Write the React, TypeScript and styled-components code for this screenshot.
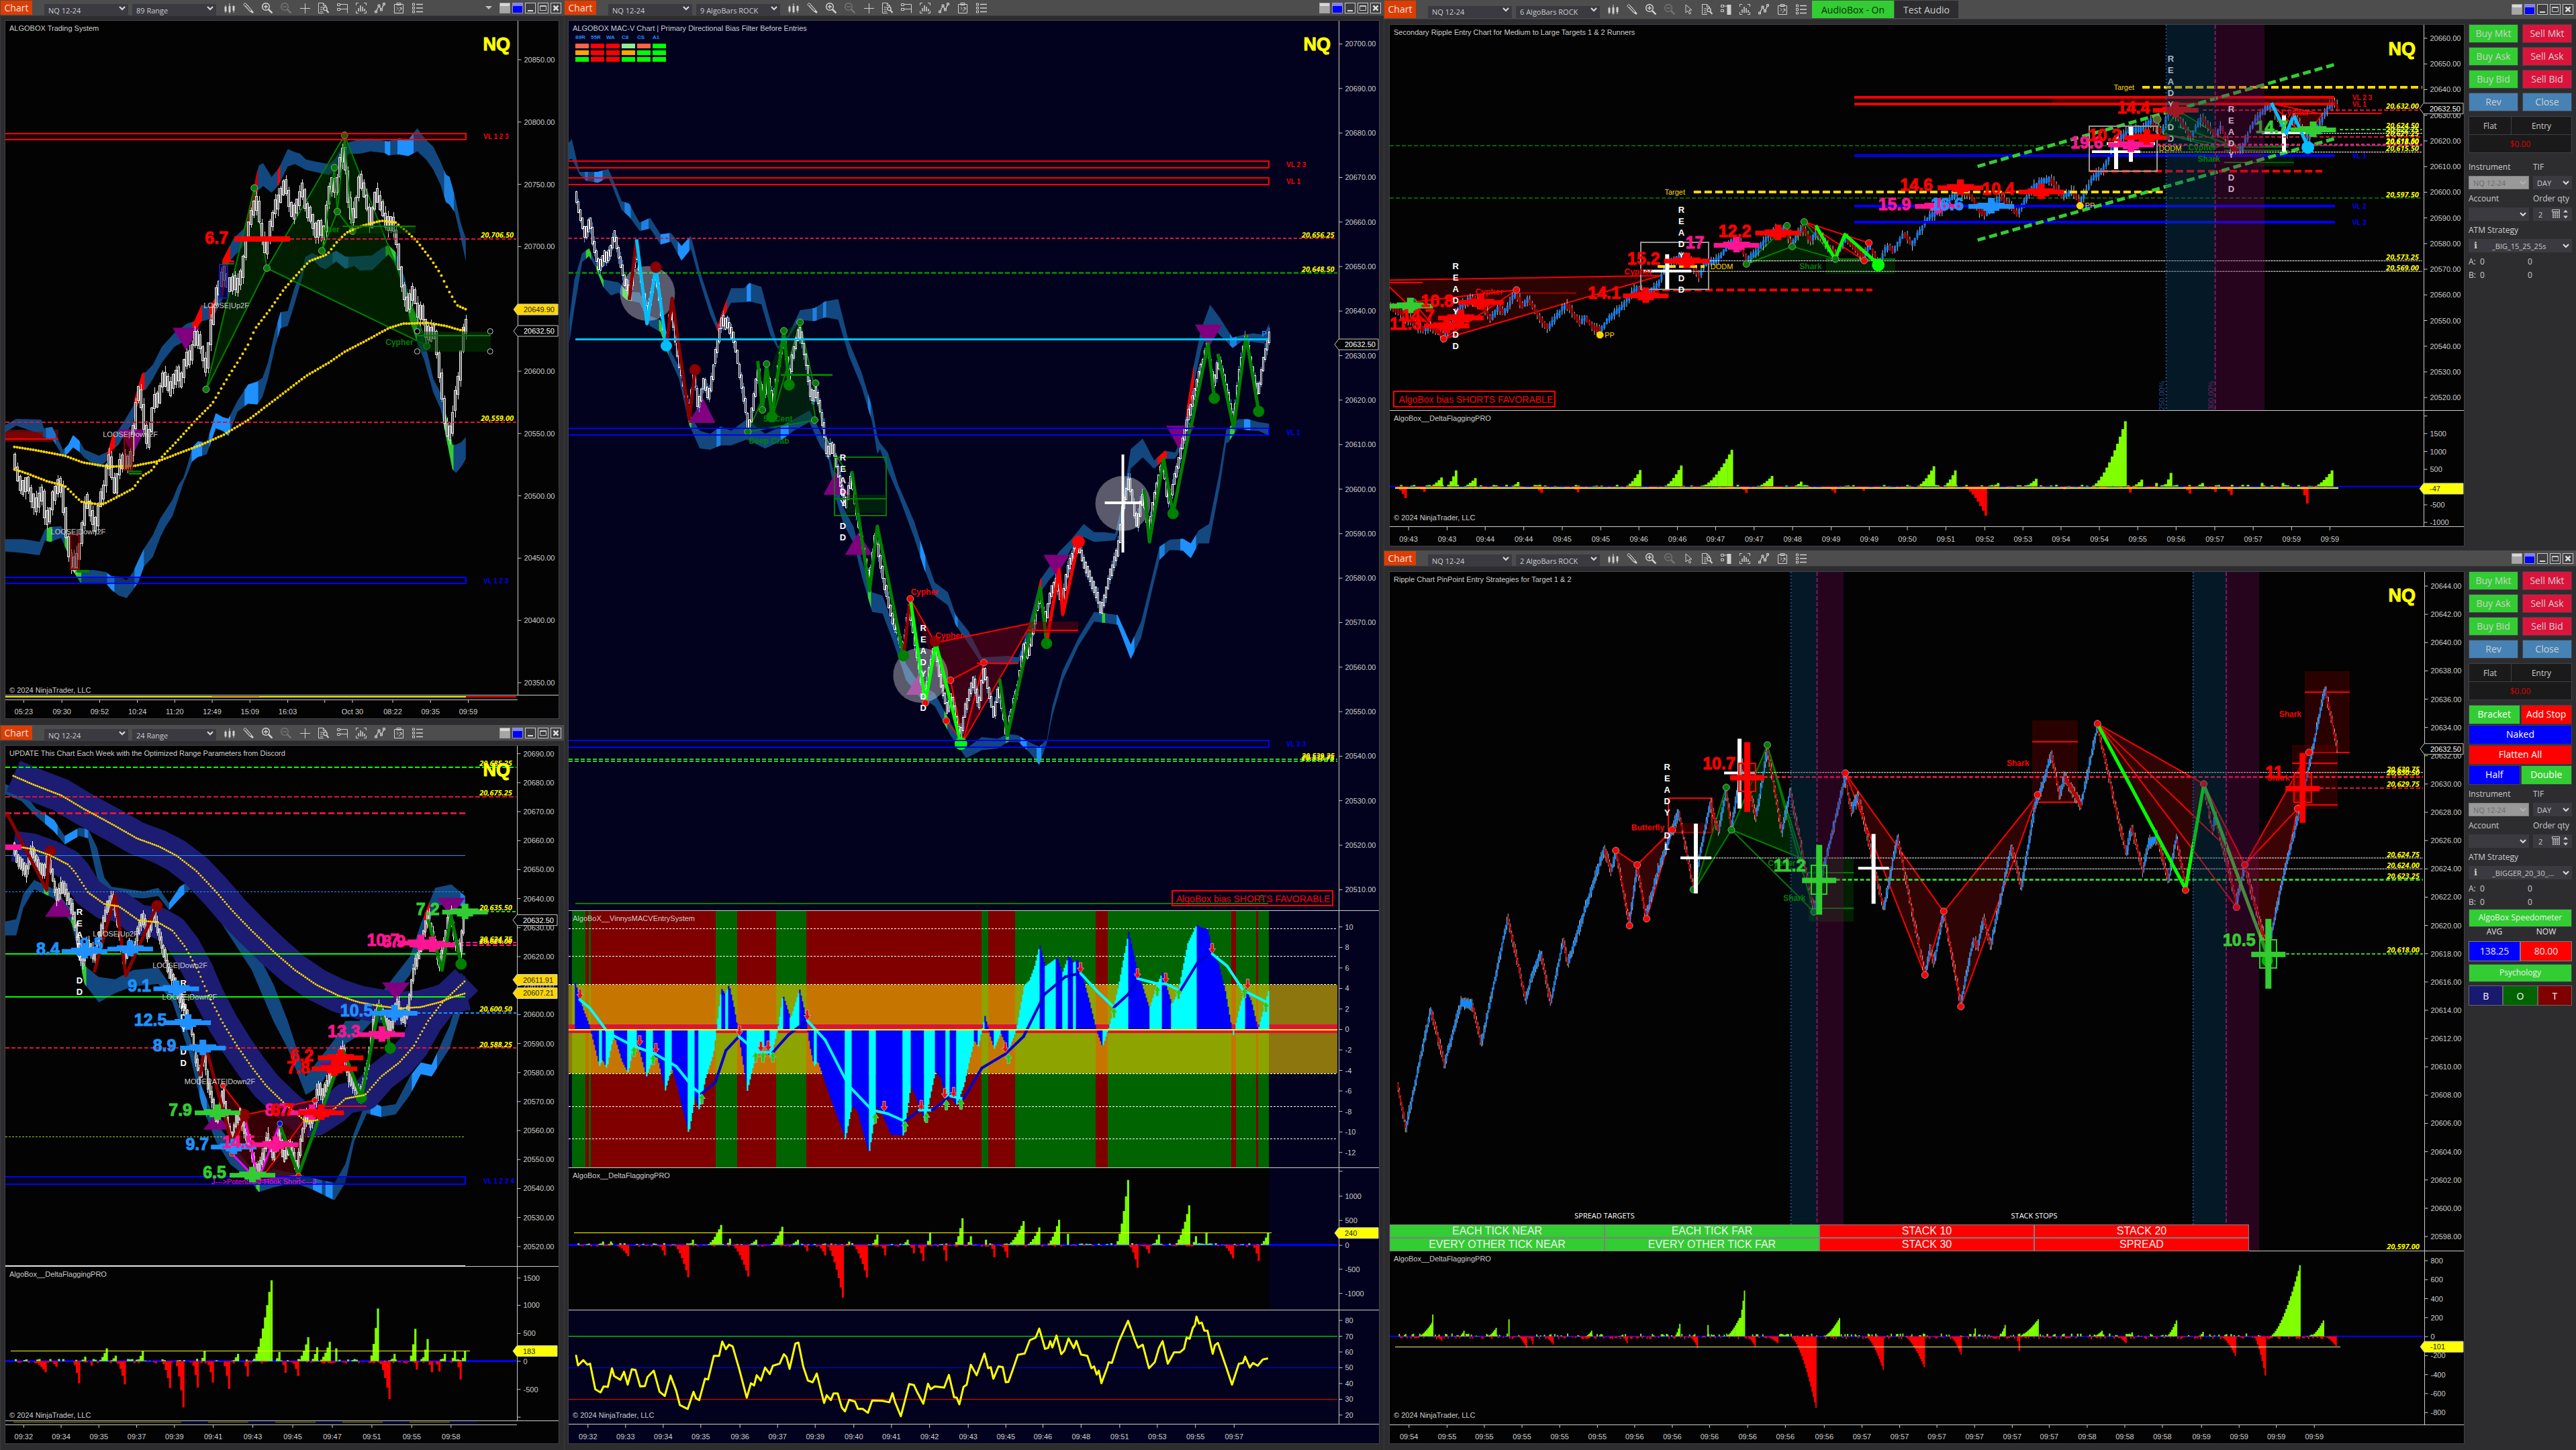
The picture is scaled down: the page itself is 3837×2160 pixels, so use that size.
import React from "react";
import styled, { createGlobalStyle } from "styled-components";

/* ------------------------------------------------------------------ */
/* Theme                                                               */
/* ------------------------------------------------------------------ */

const UI = `"Open Sans", "Noto Sans", sans-serif`;
const PLOT = `"Liberation Sans", Arial, sans-serif`;

const C = {
  chrome: "#2d2d30",
  edge: "#3f3f46",
  field: "#3a3a40",
  ink: "#cccccc",
  orange: "#dd3d00",
  lime: "#32cd32",
  crimson: "#dc143c",
  steel: "#4682b4",
  sky: "#1e90ff",
  pink: "#ff1493",
  green: "#008000",
  band: "#12487f",
  gold: "#ffd700",
  navy: "#02021e",
};

const GlobalStyle = createGlobalStyle`
  * { box-sizing: border-box; }
  body { margin: 0; background: #1b1b1e; color: ${C.ink}; font-family: ${UI}; overflow: hidden; }
  button, select, input { font-family: inherit; margin: 0; }
`;

/* ------------------------------------------------------------------ */
/* Geometry helpers: traces are recorded on a 1568-unit grid per region */
/* ------------------------------------------------------------------ */

type Scale = { x: (u: number) => number; y: (v: number) => number };
type Pt = [number, number];

const GRID = 1568;
const region = (left: number, top: number, width: number, height: number): Scale => ({
  x: (u) => left + (u * width) / GRID,
  y: (v) => top + (v * height) / GRID,
});

const A1 = region(0, 0, 840, 540);
const A2 = region(0, 540, 840, 640);
const B1 = region(0, 1080, 840, 1080);
const M1 = region(840, 0, 1220, 680);
const M2 = region(840, 640, 1220, 760);
const M3 = region(840, 1340, 1220, 820);
const D1 = region(2056, 0, 1000, 820);
const D2 = region(2950, 0, 887, 820);
const E1 = region(2056, 820, 1000, 1340);
const E2 = region(2950, 820, 887, 1340);

const nums = (t: string) => (t.match(/-?\d+/g) || []).map(Number);
const pairs = (s: Scale, t: string): Pt[] => {
  const n = nums(t);
  const out: Pt[] = [];
  for (let i = 0; i + 1 < n.length; i += 2) out.push([s.x(n[i]), s.y(n[i + 1])]);
  return out;
};
const triples = (s: Scale, t: string): number[][] => {
  const n = nums(t);
  const out: number[][] = [];
  for (let i = 0; i + 2 < n.length; i += 3) out.push([s.x(n[i]), s.y(n[i + 1]), s.y(n[i + 2])]);
  return out;
};
const noise = (i: number) => {
  const v = Math.sin(i * 12.9898 + 4.1) * 43758.5453;
  return v - Math.floor(v);
};
const join = (p: number[][]) => p.map((q) => `${q[0].toFixed(1)},${q[1].toFixed(1)}`).join(" ");
const sample = (rows: number[][], x: number, k: number) => {
  let i = 1;
  while (i < rows.length - 1 && rows[i][0] < x) i++;
  const a = rows[i - 1];
  const b = rows[i];
  const t = b[0] === a[0] ? 0 : Math.max(0, Math.min(1, (x - a[0]) / (b[0] - a[0])));
  return a[k] + (b[k] - a[k]) * t;
};

/* ------------------------------------------------------------------ */
/* Plot primitives                                                     */
/* ------------------------------------------------------------------ */

const Canvas = styled.svg`
  display: block;
  width: 100%;
  height: 100%;
`;
const Txt = styled.text<{ $c?: string; $size?: number; $anchor?: string; $bold?: boolean }>`
  font-family: ${PLOT};
  font-size: ${(p) => p.$size || 11}px;
  font-weight: ${(p) => (p.$bold ? 700 : 400)};
  fill: ${(p) => p.$c || C.ink};
  text-anchor: ${(p) => p.$anchor || "start"};
  dominant-baseline: central;
`;
const Tag = styled.text`
  font-family: ${UI};
  font-size: 11px;
  font-weight: 700;
  font-style: italic;
  fill: #ffff00;
  text-anchor: end;
  dominant-baseline: central;
`;
const Strength = styled.text<{ $c: string }>`
  font-family: ${PLOT};
  font-size: 25px;
  font-weight: 700;
  fill: ${(p) => p.$c};
  stroke: ${(p) => p.$c};
  stroke-width: 1px;
  dominant-baseline: central;
`;

const Line = ({ s, p, c, w = 2, f = "none", dash, o }: { s: Scale; p: string; c: string; w?: number; f?: string; dash?: string; o?: number }) => (
  <polyline points={join(pairs(s, p))} stroke={c} strokeWidth={w} fill={f} strokeDasharray={dash} opacity={o} strokeLinejoin="round" />
);
const Level = ({ s, y, a, b, c, w = 1, dash }: { s: Scale; y: number; a: number; b: number; c: string; w?: number; dash?: string }) => (
  <line x1={s.x(a)} x2={s.x(b)} y1={s.y(y)} y2={s.y(y)} stroke={c} strokeWidth={w} strokeDasharray={dash} shapeRendering="crispEdges" />
);
const Shape = ({ s, p, f, o = 1 }: { s: Scale; p: string; f: string; o?: number }) => <polygon points={join(pairs(s, p))} fill={f} opacity={o} />;
const Box = ({ s, r, c = "none", w = 2, f = "none" }: { s: Scale; r: number[]; c?: string; w?: number; f?: string }) => (
  <rect x={s.x(r[0])} y={s.y(r[1])} width={s.x(r[2]) - s.x(r[0])} height={s.y(r[3]) - s.y(r[1])} stroke={c} strokeWidth={w} fill={f} shapeRendering="crispEdges" />
);
const Dots = ({ s, p, c, r = 5, ring = "#999999" }: { s: Scale; p: string; c: string; r?: number; ring?: string }) => (
  <>
    {pairs(s, p).map(([x, y], i) => (
      <circle key={i} cx={x} cy={y} r={r} fill={c} stroke={ring} strokeWidth={1} />
    ))}
  </>
);
const Label = ({ s, at, c, size, anchor, bold, children }: { s: Scale; at: Pt; c?: string; size?: number; anchor?: string; bold?: boolean; children: React.ReactNode }) => (
  <Txt x={s.x(at[0])} y={s.y(at[1])} $c={c} $size={size} $anchor={anchor} $bold={bold}>
    {children}
  </Txt>
);
const Pattern = ({ s, at, c = C.green, children }: { s: Scale; at: Pt; c?: string; children: React.ReactNode }) => (
  <Label s={s} at={at} c={c} size={12} bold>{children}</Label>
);
const Volume = ({ s, at, c, children }: { s: Scale; at: Pt; c: string; children: React.ReactNode }) => (
  <Label s={s} at={at} c={c} size={10} bold>{children}</Label>
);
const Price = ({ s, x, y, children }: { s: Scale; x: number; y: number; children: React.ReactNode }) => (
  <Tag x={s.x(x)} y={s.y(y)}>{children}</Tag>
);

const Ribbon = ({ rows, marks = [], c = C.band, o = 1 }: { rows: number[][]; marks?: [number, number, string][]; c?: string; o?: number }) => {
  const shape = (list: number[][]) => join([...list.map((q) => [q[0], q[1]]), ...[...list].reverse().map((q) => [q[0], q[2]])]);
  return (
    <g opacity={o}>
      <polygon points={shape(rows)} fill={c} />
      {marks.map(([a, b, col], i) => {
        const cut = [
          [a, sample(rows, a, 1), sample(rows, a, 2)],
          ...rows.filter((q) => q[0] > a && q[0] < b),
          [b, sample(rows, b, 1), sample(rows, b, 2)],
        ];
        return <polygon key={i} points={shape(cut)} fill={col} />;
      })}
    </g>
  );
};

const Candles = ({ path, step, body, tall, wick, up, down, rise, outline, wickColor }: { path: number[][]; step: number; body: number; tall: number; wick: number; up: string; down: string; rise?: boolean; outline?: string; wickColor: string }) => {
  let wicks = "";
  let ups = "";
  let downs = "";
  const end = path[path.length - 1][0];
  let i = 0;
  for (let x = path[0][0]; x < end; x += step) {
    i++;
    const y0 = sample(path, x, 1);
    const y1 = sample(path, Math.min(end, x + step), 1);
    const mid = (y0 + y1) / 2 + (noise(i) - 0.5) * tall * 0.35;
    const h = Math.max(tall, Math.abs(y1 - y0) * 1.1);
    const left = outline ? Math.floor(x) + 0.5 : x;
    const rect = `M${left.toFixed(1)} ${(mid - h / 2).toFixed(1)}h${body}v${h.toFixed(1)}h${-body}z`;
    const a = noise(i + 500) * wick;
    const b = noise(i + 900) * wick;
    wicks += `M${(left + body / 2).toFixed(1)} ${(mid - h / 2 - a).toFixed(1)}V${(mid + h / 2 + b).toFixed(1)}`;
    if (y1 <= y0 || !rise) ups += rect;
    else downs += rect;
  }
  return (
    <g shapeRendering={outline ? "crispEdges" : undefined}>
      <path d={wicks} stroke={wickColor} strokeWidth={1} fill="none" />
      <path d={ups} fill={up} stroke={outline || "none"} />
      <path d={downs} fill={down} stroke={outline || "none"} />
    </g>
  );
};

const Delta = ({ s, base, step, from, to, ups, downs }: { s: Scale; base: number; step: number; from: number; to: number; ups: string; downs: string }) => {
  const make = (t: string, sign: number) => {
    let d = "";
    const n = nums(t);
    for (let i = 0; i + 2 < n.length; i += 3) {
      const [a, b, h] = [n[i], n[i + 1], n[i + 2]];
      const count = Math.max(1, Math.round((b - a) / step));
      for (let k = 0; k < count; k++) {
        const v = h * Math.pow((k + 1) / count, 1.6);
        d += `M${s.x(b - (count - k) * step).toFixed(1)} ${s.y(base)}V${s.y(base - sign * v).toFixed(1)}h${(s.x(step) - s.x(0)).toFixed(1)}V${s.y(base)}z`;
      }
    }
    return d;
  };
  let small = "";
  let smallDown = "";
  for (let x = from, i = 0; x < to; x += step, i++) {
    const v = (noise(i + 40) - 0.5) * 10;
    const bar = `M${s.x(x).toFixed(1)} ${s.y(base)}V${s.y(base - v).toFixed(1)}h${(s.x(step) - s.x(0)).toFixed(1)}V${s.y(base)}z`;
    if (Math.floor(i / 4) % 2 ? v > 0 : v > 3) small += bar;
    else if (v < 0) smallDown += bar;
  }
  return (
    <g>
      <path d={make(ups, 1) + small} fill="#7fff00" />
      <path d={make(downs, -1) + smallDown} fill="#ff0000" />
    </g>
  );
};

const Cross = ({ s, at, c, text, tx, ty }: { s: Scale; at: Pt; c: string; text?: string; tx?: number; ty?: number }) => {
  const x = s.x(at[0]);
  const y = s.y(at[1]);
  return (
    <g>
      <path d={`M${x - 34} ${y - 3}H${x - 20}V${y - 5}H${x - 5}V${y - 12}H${x + 5}V${y - 5}H${x + 20}V${y - 3}H${x + 34}V${y + 4}H${x + 12}V${y + 7}H${x + 5}V${y + 11}H${x - 5}V${y + 7}H${x - 12}V${y + 4}H${x - 34}z`} fill={c} />
      {text && <Strength x={s.x(tx || 0)} y={s.y(ty || 0)} $c={c}>{text}</Strength>}
    </g>
  );
};
const Plus = ({ s, at, c = "#ffffff", w = 46, h = 104, t = 6 }: { s: Scale; at: Pt; c?: string; w?: number; h?: number; t?: number }) => (
  <g fill={c}>
    <rect x={s.x(at[0]) - t / 2} y={s.y(at[1]) - h / 2} width={t} height={h} />
    <rect x={s.x(at[0]) - w / 2} y={s.y(at[1]) - 3} width={w} height={t > 8 ? 8 : 4} />
  </g>
);
const Ready = ({ s, at, word = "READY DD" }: { s: Scale; at: Pt; word?: string }) => (
  <g>
    {word.split("").map((ch, i) =>
      ch === " " ? null : (
        <Txt key={i} x={s.x(at[0])} y={s.y(at[1]) + i * 17} $c="#ffffff" $size={13} $anchor="middle" $bold>
          {ch}
        </Txt>
      )
    )}
  </g>
);

const Axis = ({ x, top, bottom, s, ticks }: { x: number; top: number; bottom: number; s: Scale; ticks: [string, number][] }) => (
  <g>
    <line x1={x} x2={x} y1={top} y2={bottom} stroke={C.ink} />
    {ticks.map(([t, v], i) => (
      <g key={i}>
        <line x1={x} x2={x + 5} y1={s.y(v)} y2={s.y(v)} stroke={C.ink} />
        <Txt x={x + 9} y={s.y(v)}>{t}</Txt>
      </g>
    ))}
  </g>
);
const ramp = (first: number, step: number, y0: number, dy: number, count: number, digits = 2): [string, number][] =>
  Array.from({ length: count }, (_, i) => [(first - step * i).toFixed(digits), y0 + dy * i] as [string, number]);

const Flag = ({ x, right, y, fill, ink, text, stroke }: { x: number; right: number; y: number; fill: string; ink: string; text: string; stroke?: string }) => (
  <g>
    <polygon points={`${x - 6},${y} ${x},${y - 8} ${right},${y - 8} ${right},${y + 8} ${x},${y + 8}`} fill={fill} stroke={stroke || C.ink} />
    <Txt x={x + 9} y={y} $c={ink}>{text}</Txt>
  </g>
);
const TimeAxis = ({ s, xs, labels, y }: { s: Scale; xs: string; labels: string; y: number }) => {
  const names = labels.split(" ");
  return (
    <g>
      {nums(xs).map((u, i) => (
        <g key={i}>
          <line x1={s.x(u)} x2={s.x(u)} y1={y} y2={y + 5} stroke={C.ink} />
          {names[i] && <Txt x={s.x(u)} y={y + 18} $anchor="middle">{names[i].replace("_", " ")}</Txt>}
        </g>
      ))}
    </g>
  );
};

/* ------------------------------------------------------------------ */
/* Window chrome                                                       */
/* ------------------------------------------------------------------ */

const Desktop = styled.main`
  display: grid;
  grid-template-columns: 840fr 1221fr 1776fr;
  height: 100vh;
`;
const Stack = styled.div<{ $rows: string }>`
  display: grid;
  grid-template-rows: ${(p) => p.$rows};
  min-width: 0;
  min-height: 0;
`;
const Frame = styled.section`
  display: flex;
  flex-direction: column;
  min-width: 0;
  min-height: 0;
  background: ${C.chrome};
  box-shadow: inset 1px 1px 0 #3a3a3f;
`;
const Bar = styled.header<{ $h: number }>`
  display: flex;
  flex: none;
  align-items: center;
  height: ${(p) => p.$h}px;
  padding: 1px 4px 1px 1px;
  background: #4d4d4d;
  border-bottom: 1px solid #3a3a3e;
`;
const ChartTab = styled.button`
  align-self: stretch;
  width: 47px;
  margin-right: 18px;
  padding: 0;
  border: 0;
  background: ${C.orange};
  color: #e6e6e6;
  font-size: 14px;
  line-height: 18px;
`;
const Picker = styled.label<{ $w?: number; $h?: number; $off?: boolean }>`
  position: relative;
  display: block;
  flex: none;
  width: ${(p) => (p.$w ? `${p.$w}px` : "100%")};
  height: ${(p) => p.$h || 18}px;
  margin-right: ${(p) => (p.$w === 125 ? 6 : 0)}px;
  svg {
    position: absolute;
    right: 4px;
    top: 50%;
    margin-top: -5px;
    pointer-events: none;
    opacity: ${(p) => (p.$off ? 0.4 : 1)};
  }
`;
const Select = styled.select<{ $pad?: number; $off?: boolean }>`
  appearance: none;
  width: 100%;
  height: 100%;
  padding: 0 16px 0 ${(p) => p.$pad || 6}px;
  border: ${(p) => (p.$off ? "1px solid #808080" : "0")};
  border-radius: 0;
  background: ${(p) => (p.$off ? "#999999" : C.field)};
  color: ${(p) => (p.$off ? "#6c6c6c" : C.ink)};
  opacity: 1;
  font-size: 11px;
  text-overflow: ellipsis;
`;
const Tools = styled.div`
  display: flex;
  gap: 8px;
  margin-left: 4px;
`;
const Tool = styled.button<{ $dim?: boolean }>`
  width: 20px;
  height: 18px;
  padding: 0;
  border: 0;
  background: none;
  color: ${(p) => (p.$dim ? "#737373" : "#d0d0d0")};
  svg { display: block; margin: 1px 2px; }
`;
const AudioButton = styled.button<{ $on?: boolean }>`
  align-self: stretch;
  width: ${(p) => (p.$on ? 122 : 95)}px;
  margin-left: ${(p) => (p.$on ? 6 : 1)}px;
  padding: 0;
  border: 0;
  background: ${(p) => (p.$on ? C.lime : C.chrome)};
  color: ${(p) => (p.$on ? "#0a2a0a" : "#cccccc")};
  font-size: 14px;
`;
const Controls = styled.div`
  display: flex;
  align-items: center;
  gap: 3px;
  margin-left: auto;
`;
const Swatch = styled.button<{ $blue?: boolean }>`
  width: 16px;
  height: 16px;
  padding: 0;
  border: 1px solid #9a9a9a;
  background: ${(p) => (p.$blue ? "linear-gradient(#8080ff 0 30%, #0000ff 30%)" : "linear-gradient(#d8d8d8 0 30%, #a6a6a6 30%)")};
`;
const Sys = styled.button`
  width: 16px;
  height: 16px;
  padding: 0;
  border: 1px solid #c8c8c8;
  background: #3f3f42;
  svg { display: block; }
`;
const Chevron = () => (
  <svg width="10" height="10" viewBox="0 0 10 10" fill="none" stroke="#d8d8d8" strokeWidth="2.2"><path d="M1 3l4 4 4-4" /></svg>
);

const iconPaths: Record<string, React.ReactNode> = {
  bars: <><path d="M2 4v11M8 1v15M14 4v11" strokeWidth="1" /><path d="M2 6v7M8 5v9M14 5v7" strokeWidth="3" /></>,
  pencil: <><path d="M1.5 1.5l2-1 9 10 2 4.5-4.5-2.2-9-9.5zM3 4l8.5 9M5 2.5l8 9" /><path d="M12 12l3 3" strokeWidth="2.5" /></>,
  zoomIn: <><circle cx="6" cy="6" r="5.3" strokeWidth="1.5" /><path d="M6 3v6M3 6h6" strokeWidth="1.5" /><path d="M10 10l5.5 5.5" strokeWidth="2.5" /></>,
  zoomOut: <><circle cx="6" cy="6" r="5.3" strokeWidth="1.5" /><path d="M3 6h6" strokeWidth="1.5" /><path d="M10 10l5.5 5.5" strokeWidth="2.5" /></>,
  plus: <path d="M8.5 1v15M1 8.5h15" />,
  cursor: <path d="M4 1v12l3-3 2.5 5 2-1-2.5-5h4z" />,
  report: <><path d="M8 15.5H.5V.5h7l4 4v2M7.5 .5v4h4M3 7h4M3 10h3M3 13h4" /><circle cx="10.5" cy="9" r="2.6" strokeWidth="1.4" /><path d="M12 11l3.5 4" strokeWidth="2" /></>,
  panel: <path d="M.5 1.5h4v3h-4zM.5 8.5h4v3h-4zM5 2.5h10.5v13M5 9.5h10" />,
  panelFull: <><path d="M.5 1.5h4v3h-4zM.5 8.5h4v3h-4zM5 3h5" /><path d="M12.5 1v15" strokeWidth="6" /></>,
  frame: <><path d="M4 .5H.5V4M12 .5h3.5V4M4 15.5H.5V12M12 15.5h3.5V12" /><path d="M4 13V8M7 13V4M10 13V6M13 13V9" strokeWidth="1.5" /></>,
  nodes: <><path d="M2 13.5L6.5 4.5L10 10.5L14 2" strokeWidth="1.3" /><path d="M.5 12h3v3h-3zM5 3h3v3h-3zM8.5 9h3v3h-3zM12.5 .5h3v3h-3z" fill="#888888" /></>,
  board: <path d="M1.5 2.5h13v13h-13zM5 .5h6v3H5zM5 6.5l2 2-2 2M8 13l4-5M9 7.5h3v3" />,
  list: <><path d="M.5 1h3v3h-3zM.5 6.5h3v3h-3zM.5 12h3v3h-3z" /><path d="M6 2.5h10M6 8h10M6 13.5h10" strokeWidth="1.3" /></>,
};
const Glyph = ({ name }: { name: string }) => (
  <svg width="16" height="16" viewBox="0 0 16 16" fill="none" stroke="currentColor" strokeWidth="1">{iconPaths[name]}</svg>
);

const Toolbar = ({ range, height = 24, caret, audio, trading }: { range: string; height?: number; caret?: boolean; audio?: boolean; trading?: boolean }) => {
  const names = ["bars", "pencil", "zoomIn", "zoomOut", trading ? "cursor" : "plus", "report", trading ? "panelFull" : "panel", "frame", "nodes", "board", "list"];
  return (
    <Bar $h={height}>
      <ChartTab>Chart</ChartTab>
      <Picker $w={125}><Select aria-label="Instrument"><option>NQ 12-24</option></Select><Chevron /></Picker>
      <Picker $w={125}><Select aria-label="Interval"><option>{range}</option></Select><Chevron /></Picker>
      <Tools>
        {names.map((n) => <Tool key={n} $dim={n === "zoomOut"} aria-label={n}><Glyph name={n} /></Tool>)}
      </Tools>
      {audio && <><AudioButton $on>AudioBox - On</AudioButton><AudioButton>Test Audio</AudioButton></>}
      <Controls>
        {caret && <svg width="22" height="8" viewBox="0 0 22 8"><path d="M4 1h10l-5 5z" fill="#bdbdbd" /></svg>}
        <Swatch aria-label="Template" />
        <Swatch $blue aria-label="Link colour" />
        <Sys aria-label="Minimize"><svg width="14" height="14"><path d="M3 11h8" stroke="#ddd" strokeWidth="2" /></svg></Sys>
        <Sys aria-label="Maximize"><svg width="14" height="14"><path d="M2.5 3.5h9v7h-9zM3 4.500h8" fill="none" stroke="#ccc" /></svg></Sys>
        <Sys aria-label="Close"><svg width="14" height="14"><path d="M3.5 3.5l7 7M10.5 3.5l-7 7" stroke="#ddd" strokeWidth="2.5" /></svg></Sys>
      </Controls>
    </Bar>
  );
};

const Body = styled.div<{ $foot: number }>`
  display: flex;
  flex: 1;
  gap: 6px;
  min-height: 0;
  padding: 7px 6px ${(p) => p.$foot}px 8px;
`;
const Plot = styled.div<{ $m?: string; $bg?: string }>`
  display: flex;
  flex: 1;
  flex-direction: column;
  min-width: 0;
  min-height: 0;
  margin: ${(p) => p.$m || "0"};
  border: 1px solid ${C.edge};
  background: ${(p) => p.$bg || "#030303"};
`;
const PaneBox = styled.div<{ $grow: number }>`
  position: relative;
  flex: ${(p) => p.$grow} 1 0;
  min-height: 0;
  overflow: hidden;
`;
const Caption = styled.span<{ $bottom?: number }>`
  position: absolute;
  left: 6px;
  ${(p) => (p.$bottom ? `bottom: ${p.$bottom}px;` : "top: 4px;")}
  font: 11px/14px ${PLOT};
  color: ${C.ink};
  white-space: pre;
`;
const Ticker = styled.strong<{ $top: number }>`
  position: absolute;
  top: ${(p) => p.$top}px;
  right: 72px;
  font: 700 27px/36px ${PLOT};
  color: #ffff00;
  -webkit-text-stroke: 1px #ffff00;
`;

const Pane = ({ box, title, copyright, ticker, children, extra }: { box: [number, number, number, number]; title?: string; copyright?: number; ticker?: number; children: React.ReactNode; extra?: React.ReactNode }) => (
  <PaneBox $grow={box[3]}>
    <Canvas viewBox={box.join(" ")}>
      {children}
      <line x1={box[0]} x2={box[0] + box[2]} y1={box[1] + box[3] - 0.5} y2={box[1] + box[3] - 0.5} stroke={title || copyright ? C.ink : "none"} />
    </Canvas>
    {title && <Caption>{title}</Caption>}
    {copyright && <Caption $bottom={copyright}>© 2024 NinjaTrader, LLC</Caption>}
    {ticker && <Ticker $top={ticker}>NQ</Ticker>}
    {extra}
  </PaneBox>
);

/* ------------------------------------------------------------------ */
/* Chart 1: 89 Range                                                   */
/* ------------------------------------------------------------------ */

const a1 = (t: string) => triples(A1, t);
const a2 = (t: string) => triples(A2, t);
const tint = (s: Scale, t: string): [number, number, string][] =>
  t.split(";").map((q) => {
    const [a, b, c] = q.trim().split(" ");
    return [s.x(+a), s.x(+b), c];
  });

const aUpper = [
  ...a2("15,228,255 45,206,230 115,208,262 122,240,275 145,235,278 160,275,310 175,320,345 190,300,330 203,265,310 220,285,325 235,318,348 275,340,385 300,325,355 312,268,320 330,245,300 345,215,265 370,160,220 375,130,190 395,40,100 405,35,100 425,8,60"),
  ...a1("450,1500,1568 485,1440,1500 520,1400,1470 540,1390,1440 560,1320,1390 585,1325,1380 600,1285,1350 620,1120,1290 630,1090,1150 650,1030,1110 680,985,1060 690,930,1000 700,870,940 712,760,840 720,715,820 732,706,805 755,765,833 775,728,800 800,645,720 820,658,710 835,665,722 850,690,735 880,700,745 915,710,757 930,690,740 950,640,690 970,615,665 1000,603,665 1030,598,655 1070,610,662 1080,612,672 1110,598,668 1135,605,675 1160,555,655 1185,605,690 1205,635,735 1225,700,800 1240,755,875 1250,765,885 1265,850,920 1280,960,1020 1295,1030,1130"),
];
const aLower = [
  ...a2("15,645,690 65,645,695 90,650,700 110,655,703 125,610,650 140,600,655 170,597,640 190,650,700 205,735,765 225,760,806 260,757,806 295,765,806 310,780,830 330,780,850 352,795,860 370,765,830 385,720,800 400,680,745 425,630,710 445,570,640 460,540,600 480,500,560 495,450,500 510,420,440 520,380,410 535,310,360 550,288,345 575,290,335 600,185,240 620,200,250 635,205,268 660,140,180 690,80,150 715,70,153 730,55,125 745,0,60"),
  ...a1("765,1430,1500 780,1350,1420 800,1345,1410 820,1240,1310 835,1190,1230 850,1110,1150 868,1095,1120 890,1110,1155 905,1105,1165 935,1085,1130 960,1110,1162 985,1110,1150 1000,1108,1170 1035,1105,1168 1060,1075,1130 1080,1060,1100 1100,1090,1140 1125,1200,1280 1140,1300,1390 1160,1380,1480 1180,1470,1560"),
  ...a2("1205,60,110 1225,110,170 1240,190,270 1258,300,390 1268,300,403 1283,290,380 1295,272,352"),
];
const aPrice = [
  ...pairs(A2, "38,345 55,430 62,460 80,440 92,500 105,520 120,470 130,590 140,560 150,480 165,450 172,450 183,580 190,680 200,740 212,740 222,680 235,560 243,480 255,560 270,600 280,500 292,450 305,330 312,400 322,470 335,350 345,360 358,380 368,320 378,170 388,90 398,170 410,310 420,230 430,120 440,160 450,80 460,30 470,100 482,80 495,20 505,80 515,0"),
  ...pairs(A1, "520,1520 530,1560 545,1440 560,1500 575,1600 590,1400 605,1260 615,1200 625,1180 640,1250 650,1200 660,1250 672,1200 685,1050 700,930 715,850 725,960 735,1040 742,1100 750,1000 765,900 778,860 795,780 805,880 820,940 832,860 843,800 855,920 870,940 880,1040 890,950 900,1050 912,880 925,760 935,830 950,680 957,640 965,750 972,870 982,980 990,900 1003,760 1013,830 1022,880 1030,990 1045,830 1060,880 1075,980 1090,960 1103,1020 1115,1180 1125,1280 1135,1330 1145,1250 1155,1280 1163,1370 1175,1320 1187,1450 1200,1450 1212,1430 1220,1560"),
  ...pairs(A2, "1228,70 1238,200 1250,270 1258,240 1265,150 1275,80 1283,0"),
  ...pairs(A1, "1288,1440 1296,1410"),
];
const aFast = [
  ...pairs(A2, "40,390 75,405 130,433 180,450 225,508 270,517 290,515 320,495 370,460 395,415 420,395 450,345 490,290 545,210 590,150 615,95 640,40 660,0"),
  ...pairs(A1, "690,1490 710,1420 750,1340 790,1250 830,1180 860,1130 910,1100 940,1040 965,1005 1010,975 1060,955 1100,962 1130,1000 1160,1045 1200,1125 1225,1185 1245,1250 1270,1320 1295,1338"),
];
const aSlow = [
  ...pairs(A2, "40,308 90,318 180,340 230,365 300,380 370,378 440,360 480,340 560,300 620,265 690,210 740,160 800,100 850,50 915,0"),
  ...pairs(A1, "960,1520 1010,1480 1080,1420 1120,1400 1190,1397 1240,1410 1280,1428 1292,1425"),
];
const Dotted = ({ p, step, w }: { p: Pt[]; step: number; w: number }) => {
  let d = "";
  for (let x = p[0][0]; x <= p[p.length - 1][0]; x += step) d += `M${x.toFixed(1)} ${sample(p, x, 1).toFixed(1)}h.1`;
  return <path d={d} fill="none" stroke={C.gold} strokeWidth={w} strokeLinecap="round" />;
};

const X0: Pt = pairs(A2, "573,98")[0];
const aPattern: Pt[] = [X0, ...pairs(A1, "707,813 742,1160 958,585 1190,1497")];

const RangeChart = () => (
  <Frame>
    <Toolbar range="89 Range" caret />
    <Plot $m="6px 7px 9px">
      <Pane box={[8, 31, 824, 1005]} title="ALGOBOX Trading System" copyright={1} ticker={17}>
        <Box s={A2} r={[15, 245, 163, 289]} f="rgba(180,20,20,.45)" />
        <Ribbon rows={aUpper} marks={tint(A1, "128 155 #1e70c8;180 222 #1e90ff;298 320 #ff0000;373 402 #ff0000;535 562 #ff0000;582 600 #ff0000;618 640 #ff0000;685 717 #d00000;772 779 #ff0000;1070 1085 #1e90ff;1105 1150 #1e90ff;1235 1262 #1e80e0")} />
        <Ribbon rows={aLower} marks={tint(A1, "130 145 #32cd32;180 190 #32cd32;203 226 #32cd32;298 318 #1e90ff;374 400 #1e80e0;533 562 #1e90ff;582 640 #1e90ff;680 718 #1e90ff;772 782 #1e80e0;925 968 #2070c0;1072 1100 #32cd32;1135 1160 #32cd32;1233 1261 #32cd32")} />
        <Box s={A2} r={[15, 252, 120, 278]} f="rgba(140,0,0,.7)" />
        <Level s={A2} y={279} a={15} b={163} c="#ff0000" w={2} />
        <polygon points={join([X0, aPattern[1], aPattern[2]])} fill="#004000" opacity={0.45} />
        <polygon points={join([aPattern[2], aPattern[3], aPattern[4]])} fill="#004000" opacity={0.45} />
        <polyline points={join([X0, aPattern[1], aPattern[2], X0])} fill="none" stroke={C.green} strokeWidth={2} />
        <polyline points={join([aPattern[2], aPattern[3], aPattern[4], aPattern[2]])} fill="none" stroke={C.green} strokeWidth={2} />
        <Shape s={A1} p="480,1418 555,1418 517,1515" f="#800080" />
        <Shape s={A2} p="328,244 403,244 370,335" f="#800080" />
        <Candles path={aPrice} step={4} body={3} tall={21} wick={11} up="#6c6c6c" down="#6c6c6c" outline="#e6e6e6" wickColor="#e6e6e6" />
        <Line s={A1} p="895,1085 930,725 938,915 958,590 980,1000 938,915 895,1085" c={C.green} />
        <Dots s={A1} p="707,813 742,1160 958,585 930,725 938,915 980,1000 895,1085 1187,1497" c={C.green} />
        <circle cx={X0[0]} cy={X0[1]} r={5} fill={C.green} stroke="#999" />
        <Dotted p={aFast} step={4} w={4} />
        <Dotted p={aSlow} step={4} w={4} />
        <Box s={A1} r={[611, 1145, 632, 1290]} c="#1a1a9c" f="rgba(0,0,90,.6)" />
        <Box s={A2} r={[345, 268, 367, 392]} c="#8b0000" f="rgba(90,0,0,.5)" />
        <Box s={A2} r={[196, 628, 220, 755]} c="#8b0000" f="rgba(90,0,0,.5)" />
        <Level s={A1} y={1130} a={618} b={651} c="#ff0000" w={3} />
        <Level s={A1} y={1140} a={618} b={651} c={C.green} w={2} />
        <Level s={A2} y={397} a={358} b={394} c={C.green} w={2} />
        <Level s={A2} y={406} a={358} b={394} c={C.green} w={3} />
        <Level s={A2} y={763} a={213} b={248} c={C.green} w={4} />
        <Box s={A1} r={[5, 577, 1295, 604]} c="#ff0000" f="rgba(120,0,20,.25)" />
        <Box s={A2} r={[5, 784, 1295, 806]} c="#0000ff" f="rgba(0,0,60,.3)" />
        <Volume s={A1} at={[1344, 591]} c="#ff0000">VL 1 2 3</Volume>
        <Volume s={A2} at={[1344, 798]} c="#0000ff">VL 1 2 3</Volume>
        <Level s={A1} y={1033} a={806} b={1435} c={C.crimson} w={2} dash="6 3" />
        <Level s={A2} y={217} a={15} b={1435} c={C.crimson} w={2} dash="6 3" />
        <Price s={A1} x={1428} y={1015}>20,706.50</Price>
        <Price s={A2} x={1428} y={202}>20,559.00</Price>
        <Box s={A1} r={[651, 1022, 806, 1045]} f="#ff0000" />
        <Strength x={A1.x(570)} y={A1.y(1028)} $c="#ff0000">6.7</Strength>
        <Level s={A1} y={978} a={952} b={1155} c={C.green} w={2} />
        <Box s={A1} r={[985, 980, 1155, 1010]} f="rgba(0,60,0,.5)" />
        <Pattern s={A1} at={[896, 992]}>pher</Pattern>
        <Box s={A1} r={[1160, 1434, 1365, 1521]} f="rgba(0,60,0,.55)" />
        <Level s={A1} y={1451} a={1160} b={1365} c={C.green} w={2} />
        <Dots s={A1} p="1160,1433 1363,1433 1160,1520 1363,1520" c="#030303" r={4} ring="#cccccc" />
        <Pattern s={A1} at={[1072, 1480]}>Cypher</Pattern>
        <Label s={A1} at={[566, 1321]}>LOOSE|Up2F</Label>
        <Label s={A2} at={[286, 262]}>LOOSE|Down2F</Label>
        <Label s={A2} at={[141, 617]}>LOOSE|Down2F</Label>
        <Axis x={771.5} top={31} bottom={1036} s={region(0, 0, GRID, GRID)} ticks={ramp(20850, 50, 89, 92.8, 11).filter((t) => t[0] !== "20650.00")} />
        <Flag x={771} right={831} y={461} fill={C.gold} ink="#222222" text="20649.90" />
        <Flag x={771} right={831} y={493} fill="#030303" ink="#ffffff" text="20632.50" />
      </Pane>
      <Pane box={[8, 1036, 824, 6]}>
        <Level s={A2} y={1220} a={15} b={1295} c="#ffff00" w={2} />
        <Level s={A2} y={1220} a={590} b={720} c="#ff8c00" w={1} />
        <Level s={A2} y={1220} a={1295} b={1435} c="#ff0000" w={2} />
      </Pane>
      <Pane box={[8, 1042, 824, 28]}>
        <line x1={8} x2={771} y1={1042.5} y2={1042.5} stroke={C.ink} />
        <TimeAxis s={A2} y={1042} xs="66 172 277 382 486 590 695 800 903 980 1092 1197 1302" labels="05:23 09:30 09:52 10:24 11:20 12:49 15:09 16:03  Oct_30 08:22 09:35 09:59" />
      </Pane>
    </Plot>
  </Frame>
);

/* ------------------------------------------------------------------ */
/* Chart 2: 24 Range                                                   */
/* ------------------------------------------------------------------ */

const bMaUpper = pairs(B1, "37,110 90,128 170,152 230,180 320,218 380,245 440,262 490,282 545,315 600,360 650,405 700,445 765,493 820,530 880,562 940,585 1000,600 1060,608 1110,613 1170,610 1220,600 1260,588 1295,580");
const bMaLower = pairs(B1, "37,262 90,268 140,282 190,302 210,320 245,362 290,387 330,392 385,422 440,427 480,445 515,480 550,530 580,585 620,645 660,695 700,740 740,780 800,825 850,857 880,855 930,830 960,808 1015,800 1060,760 1110,730 1150,695 1190,640 1230,600 1295,552");
const bUpper = triples(B1, "15,128,150 60,140,165 100,180,197 150,205,230 180,240,258 220,222,240 245,225,245 270,265,330 290,330,360 310,350,370 400,360,375 440,352,370 470,385,400 500,350,375 520,340,360 550,310,345 565,322,345 600,375,410 650,430,470 700,470,530 760,560,640 800,640,700 850,760,800 890,720,780 930,680,730 960,640,690 1000,640,670 1060,580,620 1140,500,540 1170,430,480 1210,352,392 1255,345,385 1293,370,395");
const bLower = triples(B1, "15,425,455 45,420,455 65,365,395 95,335,355 150,355,375 200,400,430 235,520,560 275,545,600 320,550,580 370,530,565 440,525,560 480,570,600 530,680,720 560,780,820 600,860,900 640,900,950 690,950,980 720,980,1010 760,960,1000 820,970,990 870,980,1005 930,990,1028 960,950,990 985,880,900 1020,810,840 1060,825,848 1100,820,842 1140,760,800 1170,730,755 1200,735,760 1250,650,700 1293,540,590");
const bPrice = pairs(B1, "38,262 50,290 62,300 72,320 90,270 105,300 120,320 137,285 150,340 160,380 175,340 190,375 205,400 218,470 232,515 245,470 265,500 280,450 295,400 315,375 330,430 345,520 360,470 372,500 385,440 400,410 412,460 430,400 445,460 460,500 475,540 490,560 505,600 520,620 535,660 548,730 560,760 568,690 580,780 592,810 605,860 620,790 632,850 645,900 655,860 668,840 682,880 695,900 715,970 730,940 745,890 762,940 778,870 790,940 805,910 815,930 828,960 840,890 852,840 868,860 885,780 900,800 915,770 940,720 955,700 970,760 985,780 1005,800 1025,730 1040,640 1055,610 1075,650 1090,660 1105,590 1118,640 1135,620 1150,530 1165,500 1180,450 1192,410 1205,460 1225,520 1240,450 1253,400 1265,460 1280,500 1293,400");

const bCrosses: [string, number, number, number, number, string][] = [
  ["8.4", 101, 484, 235, 489, C.sky], ["9.5", 222, 473, 362, 484, C.sky], ["9.1", 355, 563, 490, 570, C.sky], ["12.5", 373, 637, 523, 643, C.sky],
  ["8.9", 425, 692, 564, 698, C.sky], ["7.9", 469, 832, 605, 838, C.lime], ["9.7", 516, 906, 650, 912, C.sky], ["6.5", 564, 967, 702, 973, C.lime],
  ["14.5", 618, 901, 767, 907, C.pink], ["8.7", 737, 832, 868, 838, C.pink], ["6.7", 753, 832, 893, 838, "#ff0000"], ["7.8", 797, 740, 930, 743, "#ff0000"],
  ["6.2", 807, 714, 947, 719, "#ff0000"], ["13.3", 911, 662, 1062, 669, C.pink], ["10.5", 946, 617, 1097, 623, C.sky], ["10.7", 1020, 465, 1170, 471, C.pink],
  ["8.9", 1063, 468, 1202, 475, C.pink], ["7.2", 1157, 398, 1293, 404, C.lime],
];

const ScalpChart = () => (
  <Frame>
    <Toolbar range="24 Range" />
    <Plot $m="6px 7px 9px">
      <Pane box={[8, 1111, 824, 776]} title="UPDATE This Chart Each Week with the Optimized Range Parameters from Discord" ticker={18}>
        <Ribbon rows={bUpper} marks={tint(B1, "125 160 #1e90ff;180 215 #1e90ff;235 245 #1e80e0;470 512 #1e90ff;1180 1195 #ff0000;1280 1293 #1e80e0")} />
        <Ribbon rows={bLower} marks={tint(B1, "122 135 #32cd32;198 205 #32cd32;228 240 #32cd32;555 575 #1e80e0;712 722 #32cd32;870 895 #1e90ff;905 925 #1e90ff;1030 1060 #1e90ff;1145 1215 #1e90ff")} />
        <polyline points={join(bMaUpper)} fill="none" stroke="#1c1c72" strokeWidth={50} strokeLinejoin="round" />
        <polyline points={join(bMaLower)} fill="none" stroke="#1c1c72" strokeWidth={46} strokeLinejoin="round" />
        <Shape s={B1} p="1280,535 1330,575 1302,595 1308,618 1270,612" f="#1c1c72" />
        <Level s={B1} y={91} a={15} b={1435} c="#00ff00" w={2} dash="7 3" />
        <Level s={B1} y={155} a={15} b={1435} c={C.crimson} w={2} dash="7 3" />
        <Level s={B1} y={191} a={15} b={1293} c={C.crimson} w={3} dash="9 4" />
        <Level s={B1} y={282} a={15} b={1293} c={C.sky} />
        <Level s={B1} y={361} a={15} b={1293} c={C.sky} dash="3 2" />
        <Level s={B1} y={495} a={15} b={1293} c="#00ff00" w={2} />
        <Level s={B1} y={588} a={15} b={1293} c="#00ff00" w={2} />
        <Level s={B1} y={699} a={15} b={1435} c={C.crimson} w={2} dash="6 3" />
        <Level s={B1} y={890} a={15} b={1293} c="#9acd32" dash="3 2" />
        <Level s={B1} y={404} a={1350} b={1435} c={C.lime} w={2} dash="5 3" />
        <Level s={B1} y={471} a={1220} b={1435} c={C.pink} w={2} dash="7 3" />
        <Level s={B1} y={476} a={1220} b={1435} c={C.pink} w={2} dash="7 3" />
        <Level s={B1} y={623} a={1160} b={1435} c={C.sky} w={2} dash="5 3" />
        <Shape s={B1} p="620,780 682,843 875,812 830,975 718,990 645,927" f="#4a0008" o={0.75} />
        <Line s={B1} p="620,780 682,843 875,812" c="#ff0000" />
        <Line s={B1} p="645,927 682,843 718,990 850,850" c="#ff0000" />
        <Shape s={B1} p="125,415 205,415 165,370" f="#800080" />
        <Shape s={B1} p="565,875 642,875 602,840" f="#800080" />
        <Shape s={B1} p="1215,374 1293,374 1254,415" f="#800080" />
        <Shape s={B1} p="1062,557 1140,557 1101,595" f="#800080" />
        <Shape s={B1} p="888,730 965,730 925,768" f="#800080" />
        <Candles path={bPrice} step={3} body={2} tall={17} wick={9} up="#7d7d7d" down="#7d7d7d" outline="#d8d8d8" wickColor="#ffffff" />
        <Line s={B1} p="15,195 22,195 130,357 137,273" c="#8b0000" w={5} />
        <Line s={B1} p="262,535 320,368 350,542 437,390" c="#8b0000" w={5} />
        <Line s={B1} p="556,760 570,690 645,905 680,842" c="#8b0000" w={5} />
        <Line s={B1} p="683,860 718,985 778,862" c="#ff00ff" w={3} />
        <Line s={B1} p="645,927 718,986 830,975" c="#ff00ff" w={3} />
        <Line s={B1} p="778,865 830,972 955,705 1005,805 1055,605 1085,698" c={C.green} w={5} />
        <Line s={B1} p="1190,420 1229,530 1254,412 1282,517" c={C.green} w={5} />
        <Dots s={B1} p="140,273 437,391 680,843" c="#8b0000" r={8} ring="#8b0000" />
        <Dots s={B1} p="1005,806 1085,699 1282,517" c={C.green} r={8} ring={C.green} />
        <Dots s={B1} p="645,927 620,780 830,975 875,812" c="#ff0000" r={4} />
        <Dots s={B1} p="778,862" c="#0000ff" r={4} />
        <Dotted p={bMaUpper} step={3} w={3} />
        <Dotted p={bMaLower} step={3} w={3} />
        <Level s={B1} y={825} a={890} b={1020} c="#ff0000" w={2} />
        <Box s={B1} r={[5, 977, 1294, 993]} c="#0000ff" f="rgba(0,0,60,.4)" />
        <Box s={B1} r={[15, 258, 60, 270]} f={C.pink} />
        <Ready s={B1} at={[221, 404]} />
        <Ready s={B1} at={[510, 558]} />
        <Label s={B1} at={[258, 452]}>LOOSE|Up2F</Label>
        <Label s={B1} at={[424, 520]}>LOOSE|Down2F</Label>
        <Label s={B1} at={[451, 588]}>LOOSE|Down2F</Label>
        <Label s={B1} at={[513, 771]}>MODERATE|Down2F</Label>
        <Label s={B1} at={[588, 987]} c="#ff00ff">{"J--->Potential J-Hook Short<---J"}</Label>
        {bCrosses.map(([t, tx, ty, x, y, c], i) => <Cross key={i} s={B1} at={[x, y]} c={c} text={t} tx={tx} ty={ty} />)}
        <Level s={B1} y={1170} a={15} b={1293} c="#ffffff" w={2} />
        <Price s={B1} x={1424} y={82}>20,685.25</Price>
        <Price s={B1} x={1424} y={146}>20,675.25</Price>
        <Price s={B1} x={1424} y={394}>20,635.50</Price>
        <Price s={B1} x={1424} y={462}>20,624.75</Price>
        <Price s={B1} x={1424} y={467}>20,624.00</Price>
        <Price s={B1} x={1424} y={613}>20,600.50</Price>
        <Price s={B1} x={1424} y={690}>20,588.25</Price>
        <Volume s={B1} at={[1344, 987]} c="#0000ff">VL 1 2 3 4</Volume>
        <Axis x={770.5} top={1111} bottom={1887} s={B1} ticks={ramp(20690, 10, 62, 62.7, 18)} />
        <Flag x={770} right={830} y={B1.y(422)} fill="#030303" ink="#ffffff" text="20632.50" />
        <Flag x={770} right={830} y={B1.y(551)} fill={C.gold} ink="#222222" text="20611.91" />
        <Flag x={770} right={830} y={B1.y(580)} fill={C.gold} ink="#222222" text="20607.21" />
      </Pane>
      <Pane box={[8, 1887, 824, 230]} title="AlgoBox__DeltaFlaggingPRO" copyright={2}>
        <Level s={B1} y={1376} a={15} b={1435} c="#0000ff" w={3} />
        <Delta s={B1} base={1376} step={6} from={35} to={1290}
          ups="275 300 28 310 325 12 380 400 22 230 240 10 560 572 22 650 665 16 704 752 150 752 758 175 770 780 20 830 860 52 870 885 30 890 920 42 930 938 28 1030 1054 114 1090 1100 16 1140 1158 70 1175 1192 48 1230 1240 16 1255 1268 22 1282 1296 22"
          downs="95 130 24 205 223 48 325 350 50 450 476 58 490 513 100 535 553 57 575 595 46 625 640 60 680 692 33 785 797 25 815 832 32 1055 1086 82 1155 1162 18 1195 1204 24 1215 1225 22 1272 1284 40 145 160 12 250 258 10" />
        <Level s={B1} y={1354} a={30} b={1307} c="#ffff00" />
        <Axis x={770.5} top={1887} bottom={2117} s={B1} ticks={[["1500", 1196], ["1000", 1255], ["500", 1316], ["0", 1376], ["-500", 1437], ["", 1497]]} />
        <Flag x={770} right={830} y={B1.y(1354)} fill="#ffff00" ink="#222222" text="183" />
      </Pane>
      <Pane box={[8, 2117, 824, 5]}>
        <line x1={20} x2={693} y1={2118.5} y2={2118.5} stroke="#8a8a00" strokeWidth={1} />
        <line x1={270} x2={770} y1={2118.5} y2={2118.5} stroke="#0000a0" strokeWidth={1} strokeDasharray="40 60" />
      </Pane>
      <Pane box={[8, 2122, 824, 28]}>
        <line x1={8} x2={770} y1={2122.5} y2={2122.5} stroke={C.ink} />
        <TimeAxis s={B1} y={2122} xs="66 170 275 380 485 593 703 814 924 1034 1145 1254" labels="09:32 09:34 09:35 09:37 09:39 09:41 09:43 09:45 09:47 09:51 09:55 09:58" />
      </Pane>
    </Plot>
  </Frame>
);

/* ------------------------------------------------------------------ */
/* Chart 3: MAC-V                                                      */
/* ------------------------------------------------------------------ */

const cPrice = [
  ...pairs(M1, "22,665 35,760 42,820 50,740 58,850 68,920 78,880 88,880 97,800 108,900 120,980 128,1010 138,850 150,980 160,1090 176,920 188,1090 196,1180 206,1050 215,1180 225,1280 240,1420 250,1280 258,1400 268,1300 278,1370 290,1230 302,1100 318,1120 330,1200 342,1330 355,1480 362,1400 372,1260 382,1380 390,1270 400,1400 412,1250 421,1150 432,1310 440,1200 452,1130 465,1250 475,1380 483,1330 495,1440 505,1560"),
  ...pairs(M2, "515,50 525,130 540,240 550,140 560,250 572,350 585,470 597,320 610,440 625,560 640,620 650,680 662,540 675,680 692,830 702,720 712,660 722,780 735,870 742,820 760,950 770,850 785,760 795,860 804,730 815,820 824,880 833,790 848,940 858,860 870,790 882,660 890,700 900,600 912,500 922,600 930,520 942,460 955,540 965,420 985,350 1000,430 1015,480 1030,560 1045,450 1060,380 1070,250 1082,150 1098,300 1108,190 1120,310 1135,170 1148,100 1158,230 1170,150 1185,40 1190,0"),
  ...pairs(M1, "1200,1400 1215,1300 1233,1190 1245,1330 1253,1230 1268,1320 1282,1460 1295,1260 1306,1160 1320,1280 1330,1350 1340,1230 1350,1150"),
];
const cUpper = [
  ...triples(M1, "9,490,550 15,478,545 30,590,600 42,590,620 65,590,628 85,580,610 95,620,650 110,690,720 125,700,745 145,765,793 165,748,785 185,805,840 205,800,830 225,845,895 243,810,855 260,930,965 280,1040,1080 295,1115,1140 305,1060,1090 320,990,1040 345,990,1038 355,972,1035 378,985,1045 395,1100,1150 410,1190,1200 430,1150,1160 452,1065,1100 480,1058,1103 500,1035,1090 525,1027,1098 545,1170,1220 570,1280,1330 590,1400,1450 600,1500,1560"),
  ...triples(M2, "605,40,60 620,70,125 640,170,200 670,280,330 690,380,430 710,470,510 735,500,540 750,570,600 775,620,660 800,700,720 850,695,722 870,700,720 890,600,650 912,460,500 930,420,460 948,375,430 970,340,370 995,290,330 1015,315,345 1035,315,343 1055,320,340 1070,220,280 1085,60,120 1108,28,85 1130,95,120 1150,65,90 1170,70,90 1185,20,50"),
  ...triples(M1, "1190,1430,1480 1205,1260,1330 1220,1130,1200 1237,1047,1120 1255,1090,1150 1280,1160,1195 1300,1150,1170 1320,1145,1175 1340,1150,1180 1350,1110,1160"),
];
const cLower = [
  ...triples(M1, "10,1100,1180 20,960,1060 35,870,900 48,853,880 60,900,915 75,960,985 90,965,1015 105,970,1005 120,1000,1030 145,1005,1040 165,1085,1120 185,1100,1140 200,1190,1220 220,1260,1300 240,1420,1460 260,1480,1540 280,1490,1545 300,1465,1530 320,1480,1530 350,1440,1510 385,1490,1540 410,1470,1520 440,1440,1480 470,1410,1450 490,1480,1530"),
  ...triples(M2, "505,60,80 520,150,210 535,240,290 555,300,350 570,400,450 590,500,560 610,510,565 630,600,650 655,720,770 680,780,820 710,810,850 740,900,940 770,980,1010 800,945,985 830,950,980 850,935,960 870,940,960 890,960,990 910,975,1030 925,950,960 935,850,880 955,740,770 985,640,665 1015,560,590 1040,565,595 1060,570,600 1085,660,705 1105,590,640 1125,460,500 1140,360,400 1160,338,370 1185,335,372 1200,350,395 1215,310,350 1235,290,350 1255,130,180 1268,0,40"),
  ...triples(M1, "1272,1470,1520 1290,1440,1470 1310,1440,1478 1330,1450,1480 1350,1455,1497"),
];
const macv = pairs(M3, "21,237 35,310 48,360 58,420 67,475 73,455 81,482 92,400 97,395 110,460 122,495 130,430 140,410 157,505 170,450 178,450 193,545 205,480 215,530 238,668 250,560 258,600 270,510 285,440 291,371 300,252 308,270 315,242 325,310 335,400 350,545 362,470 372,430 385,420 395,455 408,371 418,270 433,340 450,255 460,320 470,420 478,475 485,460 510,570 538,682 550,590 560,600 583,725 597,590 608,610 625,670 650,672 663,530 680,590 690,635 710,490 720,510 730,570 740,560 750,588 765,530 775,460 785,400 792,420 805,332 815,390 823,425 835,380 850,430 865,371 880,245 890,230 900,190 910,128 920,190 930,180 943,165 953,210 965,160 975,180 982,170 990,210 1005,290 1018,371 1030,420 1045,350 1060,250 1080,92 1095,190 1105,240 1120,310 1135,240 1145,205 1155,260 1163,300 1175,260 1193,125 1210,72 1220,80 1232,85 1242,160 1252,180 1265,260 1280,390 1292,310 1303,250 1315,290 1328,371 1348,257");
const macvMa = pairs(M3, "30,285 50,310 85,380 130,415 175,440 215,475 250,540 263,553 290,520 310,430 335,390 370,435 400,435 430,385 466,345 500,400 545,530 590,600 620,610 653,632 680,600 705,600 740,560 765,568 800,480 845,440 880,390 920,270 960,220 989,210 1020,260 1053,307 1080,270 1098,225 1136,240 1152,240 1180,260 1215,175 1241,155 1270,190 1300,258 1345,292");
const zones = [15, 41, 47, 51, 290, 332, 406, 464, 799, 812, 864, 1018, 1041, 1278, 1287, 1325, 1329, 1350];
const arrowsDown = "31,270 145,403 176,425 336,375 377,420 391,418 466,330 613,590 684,587 729,553 746,550 845,423 989,195 1098,212 1152,225 1241,140 1309,242";
const arrowsUp = "134,432 171,455 264,567 367,448 381,448 400,448 596,622 653,645 694,620 732,584 760,582 851,452 1053,322 1136,260 1177,268 1303,265 1344,305";
const rsi = "23,1297 27,1327 37,1312 45,1325 50,1322 60,1395 70,1404 76,1387 84,1388 92,1335 96,1357 108,1368 115,1345 122,1382 130,1338 137,1340 146,1387 155,1386 160,1360 172,1342 183,1402 193,1414 204,1356 215,1400 222,1440 237,1451 248,1402 253,1421 259,1426 270,1365 276,1367 287,1300 297,1300 303,1259 310,1281 316,1268 323,1273 335,1335 350,1419 358,1378 364,1384 369,1355 377,1370 385,1333 394,1352 400,1328 413,1322 421,1295 426,1303 432,1337 443,1265 449,1262 458,1330 467,1370 476,1375 484,1350 498,1434 503,1412 511,1426 516,1407 524,1407 532,1447 538,1458 546,1425 557,1430 563,1451 572,1451 582,1462 590,1427 610,1428 623,1432 629,1406 634,1432 645,1472 661,1380 670,1383 677,1405 688,1436 697,1379 702,1395 710,1387 728,1390 737,1354 747,1418 752,1419 757,1438 765,1388 771,1382 779,1325 790,1355 805,1293 812,1335 817,1332 822,1365 832,1330 840,1332 846,1375 851,1374 859,1340 869,1297 882,1293 892,1255 903,1248 910,1222 921,1280 927,1277 931,1258 935,1276 943,1242 952,1295 958,1285 966,1250 976,1278 981,1257 990,1296 1002,1300 1010,1335 1015,1330 1020,1353 1024,1342 1029,1378 1040,1333 1043,1318 1049,1320 1062,1260 1080,1200 1093,1255 1099,1277 1108,1268 1120,1335 1131,1318 1139,1278 1146,1258 1156,1322 1168,1290 1179,1290 1187,1280 1192,1248 1198,1251 1204,1220 1208,1212 1211,1188 1216,1208 1221,1205 1226,1228 1232,1228 1242,1294 1246,1270 1252,1263 1268,1333 1279,1382 1292,1322 1300,1320 1304,1302 1313,1333 1319,1320 1328,1328 1338,1310 1348,1307";

const Histogram = () => {
  const zero = M3.y(371);
  let blue = "";
  let cyan = "";
  for (let x = macv[0][0]; x < macv[macv.length - 1][0]; x += 2) {
    const y = sample(macv, x, 1);
    const next = sample(macv, x + 2, 1);
    const bar = `M${x.toFixed(1)} ${zero}V${y.toFixed(1)}h2.2V${zero}z`;
    if (next < y - 1) cyan += bar;
    else blue += bar;
  }
  return <g><path d={blue} fill="#0000ff" /><path d={cyan} fill="#00ffff" /></g>;
};
const Arrow = ({ x, y, dir }: { x: number; y: number; dir: 1 | -1 }) => (
  <path d={`M${x - 2} ${y - 8 * dir}h4v${8 * dir}h3l-5 ${7 * dir}l-5 ${-7 * dir}h3z`} fill={dir === 1 ? "#ff0000" : "#00dd00"} stroke="#a9a9a9" strokeWidth={1} />
);
const Strip = styled.div`
  position: absolute;
  left: 10px;
  top: 21px;
  display: grid;
  grid-template-columns: repeat(6, 20px);
  gap: 3px;
`;
const StripHead = styled.span`
  padding-bottom: 2px;
  font: 700 8px/8px ${PLOT};
  color: #1e90ff;
`;
const StripCell = styled.i<{ $c: string }>`
  height: 7px;
  background: ${(p) => p.$c};
`;
const cells = ["#ff6347", "#ff0000", "#ff0000", "#90ee90", "#ff6347", "#00ff00", "#ffa500", "#ff0000", "#ff0000", "#ffa500", "#00ff00", "#00ff00", "#00ff00", "#ff0000", "#ff0000", "#00ff00", "#00ff00", "#00ff00"];
const valueLevels: [Scale, number, number, string][] = [
  [M1, 553, 577, "#ff0000"],
  [M1, 611, 634, "#ff0000"],
  [M1, 1471, 1495, "#0000ff"],
  [M2, 955, 976, "#0000ff"],
];

const MacvChart = () => (
  <Frame>
    <Toolbar range="9 AlgoBars ROCK" />
    <Plot $m="6px 6px 9px" $bg={C.navy}>
      <Pane box={[847, 31, 1207, 1326]} title="ALGOBOX MAC-V Chart | Primary Directional Bias Filter Before Entries" ticker={17}
        extra={<Strip>{["89R", "55R", "WA", "C8", "CS", "A1"].map((t) => <StripHead key={t}>{t}</StripHead>)}{cells.map((c, i) => <StripCell key={i} $c={c} />)}</Strip>}>
        <Ribbon rows={cUpper} marks={tint(M1, "40 46 #1e70d0;58 74 #1e90ff;116 128 #1e80e0;148 162 #1e80e0;185 202 #1e90ff;218 240 #1e90ff;293 312 #ff0000;350 358 #1e90ff;476 484 #1e80e0;496 502 #1e80e0;582 587 #1e80e0;682 692 #1e90ff;748 754 #1e80e0;908 914 #ff0000;1136 1154 #ff0000;1192 1206 #ff0000;1275 1288 #1e80e0;1303 1310 #ff0000")} />
        <Ribbon rows={cLower} marks={tint(M1, "42 52 #32cd32;62 76 #32cd32;112 130 #32cd32;182 200 #32cd32;236 244 #32cd32;292 300 #1e80e0;415 430 #1e90ff;582 588 #32cd32;728 734 #32cd32;846 852 #32cd32;874 886 #1e90ff;905 914 #1e90ff;1030 1036 #32cd32;1058 1092 #1e90ff;1140 1150 #1e80e0;1180 1210 #1e90ff;1275 1284 #32cd32;1302 1314 #1e90ff")} />
        <Level s={M1} y={819} a={9} b={1478} c={C.crimson} w={2} dash="5 3" />
        <Level s={M1} y={937} a={9} b={1480} c={C.green} w={3} dash="7 3" />
        <Level s={M2} y={1014} a={9} b={1480} c={C.lime} w={2} dash="6 3" />
        <Level s={M2} y={1020} a={9} b={1480} c={C.lime} w={2} dash="6 3" />
        <Level s={M2} y={1457} a={22} b={1348} c={C.green} w={2} />
        <Shape s={M1} p="238,1453 290,1453 267,1370" f="#800080" />
        <Shape s={M1} p="1208,1115 1260,1115 1234,1195" f="#800080" />
        <Shape s={M1} p="1153,1462 1208,1462 1180,1550" f="#800080" />
        <Shape s={M2} p="497,200 545,200 520,130" f="#800080" />
        <Shape s={M2} p="538,385 590,385 564,315" f="#800080" />
        <Shape s={M2} p="918,385 968,385 942,450" f="#800080" />
        <Shape s={M2} p="655,815 706,815 680,750" f="#800080" />
        <Shape s={M1} p="352,1483 421,1136 452,1107 482,1443" f="#004000" o={0.45} />
        <Line s={M1} p="352,1483 388,1340 400,1430 452,1107 482,1443 352,1483" c={C.green} />
        <Line s={M1} p="452,1107 500,1500 540,1620" c={C.green} />
        <Shape s={M2} p="663,520 711,655 895,595 764,960" f="#800010" o={0.45} />
        <Line s={M2} p="690,840 663,520 711,655 895,595 764,960 711,655" c="#ff0000" />
        <Line s={M2} p="740,770 804,716 764,960 740,770" c="#ff0000" />
        <Line s={M2} p="804,716 764,960 732,895" c="#ff0000" />
        <Candles path={cPrice} step={3} body={2} tall={16} wick={8} up={C.navy} down={C.navy} outline="#ffffff" wickColor="#4aa8ff" />
        <ellipse cx={M1.x(160)} cy={M1.y(1008)} rx={41} ry={41} fill="#ffffff" opacity={0.35} />
        <ellipse cx={M2.x(683)} cy={M2.y(755)} rx={41} ry={41} fill="#ffffff" opacity={0.35} />
        <ellipse cx={M2.x(1070)} cy={M2.y(227)} rx={41} ry={41} fill="#ffffff" opacity={0.35} />
        <Line s={M1} p="125,1030 139,822" c="#8b0000" w={5} />
        <Line s={M1} p="139,822 159,1112 176,918 196,1188" c="#00bfff" w={5} />
        <Line s={M1} p="196,1188 207,1025 240,1440 251,1270" c="#8b0000" w={5} />
        <Dots s={M1} p="176,918 251,1270" c="#8b0000" r={8} ring="#8b0000" />
        <Dots s={M1} p="196,1188" c="#00bfff" r={8} ring="#00bfff" />
        <Line s={M1} p="371,1240 380,1408 388,1250 398,1432 421,1136 431,1320" c={C.green} w={5} />
        <Dots s={M1} p="380,1408 388,1250 421,1136 452,1107 482,1316 480,1443 352,1483" c={C.green} />
        <Dots s={M1} p="398,1432 431,1322 1245,1368 1330,1413" c={C.green} r={8} ring={C.green} />
        <Line s={M2} p="551,127 585,495 600,297 650,695" c={C.green} w={5} />
        <Line s={M2} p="650,695 663,520" c="#8b0000" w={5} />
        <Line s={M2} p="663,520 692,838 712,655 760,965" c="#00ff00" w={5} />
        <Line s={M2} p="834,766 849,940 912,485 924,655" c={C.green} w={5} />
        <Line s={M2} p="924,655 948,430 955,568 985,345" c="#ff0000" w={5} />
        <Line s={M2} p="1111,185 1121,345 1148,90 1166,258 1200,-20" c={C.green} w={5} />
        <Line s={M1} p="1200,1470 1233,1180 1245,1368" c={C.green} w={5} />
        <Line s={M1} p="1252,1215 1282,1470 1306,1155 1330,1413" c={C.green} w={5} />
        <Dots s={M2} p="650,695 924,657 1166,258" c={C.green} r={8} ring={C.green} />
        <Dots s={M2} p="985,345" c="#ff0000" r={9} ring="#ff0000" />
        <Dots s={M2} p="711,650" c="#8b0000" r={8} ring="#8b0000" />
        <Dots s={M2} p="760,965" c="#00ff00" r={9} ring="#00ff00" />
        <Dots s={M2} p="663,520 740,770 804,716 732,895 692,840" c="#ff0000" />
        <Box s={M2} r={[887, 590, 985, 625]} f="rgba(120,0,10,.45)" />
        <Level s={M2} y={617} a={887} b={985} c="#ff0000" w={2} />
        <Level s={M2} y={719} a={790} b={870} c="#ff0000" w={2} />
        <Level s={M1} y={1287} a={415} b={514} c={C.green} w={3} />
        <Box s={M2} r={[518, 85, 617, 265]} c={C.green} />
        <Box s={M2} r={[540, 200, 617, 256]} f="rgba(0,60,0,.5)" />
        <Level s={M2} y={212} a={518} b={617} c={C.green} w={2} />
        <Plus s={M2} at={[1070, 227]} w={54} h={146} t={4} />
        <Ready s={M2} at={[534, 85]} />
        <Ready s={M2} at={[688, 610]} />
        <Level s={M1} y={1166} a={22} b={1348} c="#00bfff" w={3} />
        <Label s={M1} at={[1336, 1147]} c={C.sky} bold>P</Label>
        {valueLevels.map(([s, a, b, c], i) => (
          <Box key={i} s={s} r={[5, a, 1349, b]} c={c} f={c === "#ff0000" ? "rgba(120,0,20,.15)" : "none"} />
        ))}
        <Volume s={M1} at={[1383, 566]} c="#ff0000">VL 2 3</Volume>
        <Volume s={M1} at={[1383, 624]} c="#ff0000">VL 1</Volume>
        <Volume s={M1} at={[1383, 1485]} c="#0000ff">VL 1</Volume>
        <Volume s={M2} at={[1383, 967]} c="#0000ff">VL 2 3</Volume>
        <Pattern s={M1} at={[382, 1438]}>50 Cent</Pattern>
        <Pattern s={M1} at={[354, 1514]}>Deep Crab</Pattern>
        <Pattern s={M2} at={[664, 499]} c="#ff0000">Cypher</Pattern>
        <Pattern s={M2} at={[711, 633]} c="#ff0000">Cypher</Pattern>
        <Price s={M1} x={1475} y={806}>20,656.25</Price>
        <Price s={M1} x={1475} y={923}>20,648.50</Price>
        <Price s={M2} x={1475} y={1001}>20,539.25</Price>
        <Price s={M2} x={1475} y={1007}>20,538.75</Price>
        <Box s={M2} r={[1164, 1417, 1471, 1463]} c="#ff0000" />
        <Label s={M2} at={[1172, 1442]} c="#ff0000" size={14}>AlgoBox bias SHORTS FAVORABLE</Label>
        <Label s={M2} at={[1331, 1438]} c={C.green}>S</Label>
        <Axis x={1994.5} top={31} bottom={1357} s={M1} ticks={ramp(20700, 10, 151, 152.9, 20)} />
        <Flag x={1994} right={2053} y={M1.y(1183)} fill="#030303" ink="#ffffff" text="20632.50" />
      </Pane>
      <Pane box={[847, 1357, 1207, 383]} title="AlgoBoX__VinnysMACVEntrySystem">
        {zones.slice(1).map((z, i) => <Box key={i} s={M3} r={[zones[i], 30, z, 765]} f={i % 2 ? "#800000" : "#006400"} />)}
        <Box s={M3} r={[9, 242, 1481, 496]} f="rgba(255,215,0,.55)" />
        <Box s={M3} r={[9, 356, 1481, 381]} f={C.crimson} />
        {[83, 162, 242, 496, 590, 682].map((y) => <Level key={y} s={M3} y={y} a={9} b={1481} c="#ffffff" dash="3 2" />)}
        <Histogram />
        {macvMa.slice(1).map((q, i) => (
          <line key={i} x1={macvMa[i][0]} y1={macvMa[i][1]} x2={q[0]} y2={q[1]} stroke={q[1] < macvMa[i][1] - 1 ? "#0000cd" : "#00ffff"} strokeWidth={4} strokeLinecap="round" />
        ))}
        <Level s={M3} y={371} a={9} b={1481} c="#ffff00" w={2} />
        {pairs(M3, arrowsDown).map(([x, y], i) => <Arrow key={i} x={x} y={y} dir={1} />)}
        {pairs(M3, arrowsUp).map(([x, y], i) => <Arrow key={i} x={x} y={y} dir={-1} />)}
        <Axis x={1994.5} top={1357} bottom={1740} s={M3} ticks={ramp(10, 2, 78, 58.4, 12, 0)} />
      </Pane>
      <Pane box={[847, 1740, 1207, 212]} title="AlgoBox__DeltaFlaggingPRO">
        <Box s={M3} r={[5, 764, 1350, 1169]} f="#030303" />
        <Level s={M3} y={984} a={9} b={1481} c="#0000ff" w={3} />
        <Delta s={M3} base={984} step={4} from={22} to={1345}
          ups="275 303 57 312 320 18 355 370 15 398 420 52 435 450 15 240 249 15 70 77 10 85 92 10 540 548 10 590 602 30 650 660 15 697 703 36 750 765 76 775 781 25 805 810 15 850 882 68 890 912 50 928 950 72 962 967 32 1057 1082 185 1130 1141 30 1170 1199 113 1205 1212 25 1228 1232 36 1333 1350 34"
          downs="100 125 32 185 195 30 212 240 92 322 355 90 505 536 150 555 582 93 610 617 30 665 672 24 680 690 46 725 734 46 818 826 35 840 851 36 1085 1100 65 1112 1122 24 1265 1283 38 1320 1332 46 488 502 30 460 468 18" />
        <Level s={M3} y={949} a={19} b={1355} c="#ffff00" />
        <Axis x={1994.5} top={1740} bottom={1952} s={M3} ticks={[["", 774], ["1000", 845], ["500", 914], ["0", 985], ["-500", 1053], ["-1000", 1122]]} />
        <Flag x={1994} right={2053} y={M3.y(950)} fill="#ffff00" ink="#222222" text="240" />
      </Pane>
      <Pane box={[847, 1952, 1207, 170]} copyright={7}>
        <Level s={M3} y={1244} a={9} b={1481} c="#00ff00" />
        <Level s={M3} y={1334} a={9} b={1481} c="#0000ff" />
        <Level s={M3} y={1424} a={9} b={1481} c="#ff0000" />
        <Line s={M3} p={rsi} c="#ffff00" w={3} />
        <Axis x={1994.5} top={1952} bottom={2122} s={M3} ticks={ramp(80, 10, 1199, 44.9, 7, 0)} />
      </Pane>
      <Pane box={[847, 2122, 1207, 28]}>
        <TimeAxis s={M3} y={2122} xs="46 118 190 262 337 409 481 555 627 700 774 846 917 990 1064 1136 1209 1283" labels="09:32 09:33 09:34 09:35 09:36 09:37 09:39 09:40 09:41 09:42 09:43 09:45 09:46 09:48 09:51 09:53 09:55 09:57" />
      </Pane>
    </Plot>
  </Frame>
);

/* ------------------------------------------------------------------ */
/* Charts 4 and 5: ripple entry charts                                 */
/* ------------------------------------------------------------------ */

const dPrice = [
  ...pairs(D1, "22,870 60,900 100,940 118,930 150,960 165,920 190,870 215,850 240,870 260,910 280,870 290,895 318,830 332,880 346,850 365,890 392,935 410,905 437,865 465,920 480,905 500,935 515,940 540,900 560,880 600,820 625,840 650,810 670,750 705,730 725,740 745,790 760,750 785,745 820,690 840,690 857,740 885,710 910,665 945,650 962,695 988,645 1005,690 1020,660 1065,730 1088,680 1110,710 1130,730 1145,700 1165,750 1185,700 1200,715 1225,665 1242,700 1280,620 1310,600 1350,545 1375,550 1400,600 1415,610 1450,560 1490,610 1520,540 1540,520 1568,510"),
  ...pairs(D2, "215,560 245,545 262,580 300,500 320,490 360,400 395,370 425,370 450,340 465,370 480,375 500,310 520,330 555,390 585,335 620,390 635,360 660,420 685,430 720,350 745,315 765,300 785,340 805,380 830,330 860,395 885,370 910,320 930,290 938,305"),
];
const ePrice = [
  ...pairs(E1, "40,930 60,1005 118,800 150,895 188,790 215,790 236,860 298,640 340,785 352,745 375,700 398,790 427,680 438,720 523,520 540,560 550,525 582,650 600,550 620,640 648,560 697,455 732,590 770,440 790,490 808,420 820,485 845,370 878,465 904,345 938,490 957,420 1013,625 1086,395 1100,455 1115,430 1120,440 1176,625 1208,500 1272,740 1285,690 1293,720 1316,630 1356,790 1385,680 1395,690 1410,640 1425,690 1475,515 1497,590 1530,440"),
  ...pairs(E2, "155,425 187,355 208,425 222,395 265,445 308,305 350,430 385,530 397,480 428,560 442,510 465,500 495,575 516,500 540,585 588,410 612,490 618,460 674,615 696,550 715,600 757,700 790,590 845,440 880,330 907,240 940,345"),
];

const Shade = ({ s, a, b, c, bottom, c1, c2 }: { s: Scale; a: number; b: number; c: number; bottom: number; c1: number; c2: number }) => (
  <g>
    <Box s={s} r={[a, 10, b, bottom]} f="rgba(10,60,95,.38)" />
    <Box s={s} r={[b, 10, c, bottom]} f="rgba(110,10,85,.34)" />
    <line x1={s.x(a)} x2={s.x(a)} y1={c1} y2={c2} stroke="#1c4f9c" strokeWidth={2} strokeDasharray="2 3" />
    <line x1={s.x(b)} x2={s.x(b)} y1={c1} y2={c2} stroke="#7a1c64" strokeWidth={2} strokeDasharray="6 3" />
  </g>
);

const RunnerPlot = () => (
  <Plot>
    <Pane box={[2070, 37, 1600, 575]} title="Secondary Ripple Entry Chart for Medium to Large Targets 1 & 2 Runners" ticker={18}>
      <Level s={D1} y={414} a={22} b={2430} c="#006400" dash="6 3" w={2} />
      <Level s={D1} y={565} a={22} b={2430} c="#006400" dash="6 3" w={2} />
      <Shape s={D1} p="22,800 655,787 148,965 22,820" f="#2a0303" />
      <Line s={D1} p="22,798 655,785 148,965 22,818" c="#ff0000" />
      <Line s={D1} p="22,868 77,860 148,965 318,826 77,860" c="#ff0000" />
      <Level s={D1} y={805} a={22} b={98} c="#ff0000" w={2} />
      <Level s={D1} y={834} a={318} b={458} c="#ff0000" w={2} />
      <Box s={D1} r={[318, 824, 458, 834]} f="#330303" />
      <Shape s={D1} p="855,750 950,643 962,700 990,633 1065,738" f="#003300" o={0.6} />
      <Shape s={D1} p="990,633 1065,735 1141,692 1130,742" f="#500000" o={0.5} />
      <Line s={D1} p="855,752 950,643 962,702 990,632 1063,738 962,702 855,752" c={C.green} />
      <Line s={D1} p="990,632 1130,742 1141,692 990,632" c="#ff0000" />
      <Box s={D1} r={[1041, 738, 1203, 781]} f="rgba(0,60,0,.5)" />
      <Level s={D1} y={739} a={1041} b={1203} c={C.green} w={2} />
      <Shape s={D2} p="480,375 510,310 620,390 685,425" f="#003300" o={0.6} />
      <Line s={D2} p="465,340 480,380 520,315 685,425 480,380" c={C.green} />
      <Line s={D2} p="520,360 650,410 620,420 480,380" c={C.green} />
      <Box s={D2} r={[820, 322, 898, 370]} f="#350505" />
      <Line s={D2} p="765,295 900,325 855,390 765,295" c="#ff0000" />
      <Level s={D2} y={323} a={820} b={1058} c="#ff0000" w={2} />
      <Level s={D2} y={418} a={640} b={812} c={C.green} w={2} />
      <Level s={D2} y={428} a={642} b={812} c={C.green} w={2} />
      <Level s={D2} y={463} a={642} b={826} c={C.green} w={2} />
      <Box s={D2} r={[720, 428, 826, 475]} f="rgba(0,50,0,.4)" />
      <Candles path={dPrice} step={3.7} body={3} tall={8} wick={7} up="#1080ff" down="#b00000" rise wickColor="#c8c8c8" />
      <Level s={D1} y={277} a={1107} b={1932} c="#ff0000" w={4} />
      <Level s={D1} y={296} a={1107} b={1932} c="#ff0000" w={4} />
      <Box s={D2} r={[187, 273, 932, 301]} f="rgba(120,0,0,.5)" />
      <Level s={D2} y={277} a={0} b={932} c="#ff0000" w={4} />
      <Level s={D2} y={296} a={0} b={932} c="#ff0000" w={4} />
      {[443, 587, 633].map((y) => <line key={y} x1={D1.x(1107)} x2={D2.x(933)} y1={D1.y(y)} y2={D1.y(y)} stroke="#0000ff" strokeWidth={4} />)}
      <line x1={D1.x(732)} x2={D2.x(480)} y1={D1.y(547)} y2={D1.y(547)} stroke={C.gold} strokeWidth={4} strokeDasharray="11 5" />
      <Level s={D2} y={248} a={426} b={1163} c={C.gold} w={4} dash="11 5" />
      <Level s={D1} y={759} a={648} b={757} c={C.gold} w={4} dash="11 5" />
      <Level s={D1} y={826} a={608} b={1150} c="#ff0000" w={4} dash="11 5" />
      <Level s={D2} y={487} a={288} b={900} c="#ff0000" w={4} dash="11 5" />
      <line x1={D1.x(700)} x2={D2.x(1163)} y1={D1.y(743)} y2={D1.y(743)} stroke="#ffffff" strokeDasharray="3 1" />
      <line x1={D1.x(700)} x2={D2.x(1163)} y1={D1.y(773)} y2={D1.y(773)} stroke="#ffffff" strokeDasharray="3 1" />
      <line x1={D1.x(1395)} y1={D1.y(474)} x2={D2.x(932)} y2={D2.y(184)} stroke={C.lime} strokeWidth={5} strokeDasharray="12 6" />
      <line x1={D1.x(1395)} y1={D1.y(684)} x2={D2.x(932)} y2={D2.y(395)} stroke={C.lime} strokeWidth={5} strokeDasharray="12 6" />
      <Box s={D1} r={[608, 691, 767, 824]} c="#999999" />
      <Box s={D2} r={[287, 360, 465, 487]} c="#999999" />
      <Plus s={D1} at={[670, 774]} w={72} h={52} />
      <Plus s={D2} at={[357, 434]} w={72} h={50} />
      <Plus s={D2} at={[396, 411]} w={72} h={52} />
      <Plus s={D2} at={[799, 380]} w={66} h={54} />
      <Level s={D2} y={314} a={585} b={1163} c={C.crimson} w={2} dash="6 3" />
      <Level s={D2} y={391} a={510} b={1163} c={C.crimson} w={2} dash="6 3" />
      <Level s={D2} y={412} a={465} b={1163} c={C.pink} w={3} dash="5 3" />
      <Level s={D2} y={370} a={945} b={1163} c={C.lime} w={2} dash="5 3" />
      <Level s={D2} y={380} a={740} b={1163} c="#ffffff" dash="3 1" />
      <Level s={D2} y={433} a={420} b={1163} c="#ffffff" dash="3 1" />
      <Line s={D1} p="1017,642 1062,738 1085,668 1163,752" c="#00ff00" w={5} />
      <Line s={D2} p="766,293 805,380 825,328 862,418" c="#00bfff" w={5} />
      <Dots s={D1} p="77,860 855,752 950,643 962,702 990,632 1063,738" c={C.green} />
      <Dots s={D2} p="465,340" c="#556b2f" r={6} />
      <Dots s={D1} p="148,965 318,826 1141,692 1130,742" c="#ff0000" />
      <Dots s={D1} p="1163,755" c="#00ff00" r={9} ring="#00ff00" />
      <Dots s={D2} p="862,420" c="#00bfff" r={9} ring="#00bfff" />
      <Dots s={D1} p="513,954" c={C.gold} ring={C.gold} />
      <Dots s={D2} p="262,586" c={C.gold} ring={C.gold} />
      <Ready s={D1} at={[176, 758]} />
      <Ready s={D1} at={[703, 597]} />
      <Ready s={D2} at={[501, 168]} />
      <Ready s={D2} at={[660, 310]} />
      <Cross s={D1} at={[70, 871]} c={C.lime} />
      <Cross s={D1} at={[235, 861]} c="#ff0000" text="10.8" tx={95} ty={856} />
      <Cross s={D1} at={[188, 905]} c="#ff0000" text="14.7" tx={50} ty={898} />
      <Cross s={D1} at={[155, 928]} c="#ff0000" text="11.3" tx={22} ty={922} />
      <Cross s={D1} at={[620, 842]} c="#ff0000" text="14.1" tx={485} ty={834} />
      <Cross s={D1} at={[716, 743]} c="#ff0000" text="15.2" tx={577} ty={737} />
      <Cross s={D1} at={[832, 698]} c={C.pink} text="17" tx={713} ty={690} />
      <Cross s={D1} at={[929, 663]} c="#ff0000" text="12.2" tx={790} ty={657} />
      <Cross s={D1} at={[1302, 587]} c={C.pink} text="15.9" tx={1163} ty={581} />
      <Cross s={D1} at={[1427, 587]} c={C.sky} text="16.6" tx={1286} ty={581} />
      <Cross s={D1} at={[1355, 534]} c="#ff0000" text="14.6" tx={1214} ty={526} />
      <Cross s={D2} at={[160, 546]} c="#ff0000" text="10.4" tx={4} ty={538} />
      <Cross s={D2} at={[396, 412]} c={C.pink} text="19.6" tx={237} ty={405} />
      <Cross s={D2} at={[438, 391]} c="#ff0000" text="10.2" tx={284} ty={384} />
      <Cross s={D2} at={[514, 313]} c="#ff0000" text="14.4" tx={360} ty={306} />
      <Cross s={D2} at={[876, 369]} c={C.lime} text="14.7" tx={724} ty={361} />
      <Shade s={D2} a={489} b={618} c={748} bottom={1180} c1={37} c2={612} />
      <Label s={D1} at={[664, 547]} c={C.gold}>Target</Label>
      <Label s={D2} at={[351, 248]} c={C.gold}>Target</Label>
      <Label s={D1} at={[771, 759]} c={C.gold}>DODM</Label>
      <Label s={D2} at={[470, 423]} c={C.gold}>DODM</Label>
      <Label s={D1} at={[524, 954]} c={C.gold}>PP</Label>
      <Label s={D2} at={[275, 586]} c={C.gold}>PP</Label>
      <Pattern s={D1} at={[222, 832]} c="#ff0000">Cypher</Pattern>
      <Pattern s={D1} at={[570, 775]} c="#ff0000">Cypher</Pattern>
      <Pattern s={D1} at={[979, 760]}>Shark</Pattern>
      <Pattern s={D2} at={[547, 421]}>Cypher</Pattern>
      <Pattern s={D2} at={[572, 453]}>Shark</Pattern>
      <Pattern s={D2} at={[792, 322]} c="#ff0000">Cypher</Pattern>
      <Volume s={D2} at={[979, 279]} c="#ff0000">VL 2 3</Volume>
      <Volume s={D2} at={[979, 297]} c="#ff0000">VL 1</Volume>
      <Volume s={D2} at={[979, 444]} c="#0000ff">VL 1</Volume>
      <Volume s={D2} at={[979, 588]} c="#0000ff">VL 2</Volume>
      <Volume s={D2} at={[979, 634]} c="#0000ff">VL 3</Volume>
      {([[301, "20,632.00"], [356, "20,624.50"], [368, "20,622.75"], [380, "20,621.25"], [401, "20,618.50"], [403, "20,618.00"], [422, "20,615.50"], [553, "20,597.50"], [732, "20,573.25"], [762, "20,569.00"]] as [number, string][]).map(([y, t]) => (
        <Price key={y} s={D2} x={1154} y={y}>{t}</Price>
      ))}
      <g transform={`translate(${D2.x(477)} 611) rotate(-90)`}><Txt $c="#1c4f9c" $size={11}>250.00%</Txt></g>
      <g transform={`translate(${D2.x(607)} 611) rotate(-90)`}><Txt $c="#7a1c64" $size={11}>300.00%</Txt></g>
      <Box s={D1} r={[32, 1115, 408, 1158]} c="#ff0000" />
      <Label s={D1} at={[43, 1138]} c="#ff0000" size={14}>AlgoBox bias SHORTS FAVORABLE</Label>
      <Axis x={3610.5} top={37} bottom={612} s={D2} ticks={ramp(20660, 10, 109, 73.1, 15)} />
      <Flag x={3610} right={3669} y={D2.y(309)} fill="#030303" ink="#ffffff" text="20632.50" />
    </Pane>
    <Pane box={[2070, 612, 1600, 173]} title="AlgoBox__DeltaFlaggingPRO" copyright={7}>
      <line x1={2070} x2={3607} y1={D1.y(1386)} y2={D1.y(1386)} stroke="#0000ff" strokeWidth={2} />
      <Delta s={D1} base={1386} step={6} from={40} to={1860}
        ups="115 146 26 158 180 46 195 225 24 305 325 13 575 610 47 665 706 60 750 824 105 885 918 30 970 986 14 1255 1296 58 1315 1346 46 1430 1446 10 1505 1535 22"
        downs="38 62 33 90 106 15 355 380 18 450 465 16 840 858 18 1040 1065 18 1120 1132 12 1365 1417 83" />
      <Delta s={D2} base={1386} step={7} from={540} to={920}
        ups="292 385 186 400 428 20 485 505 39 570 588 10 880 929 46 735 745 10 795 800 10 460 467 10"
        downs="385 398 17 535 555 20 600 622 15 640 664 24 842 864 48 215 225 8" />
      <Level s={D1} y={1391} a={34} b={2238} c="#ffff00" w={2} />
      <Axis x={3610.5} top={612} bottom={785} s={D2} ticks={[["", 1185], ["1500", 1235], ["1000", 1286], ["500", 1337], ["-500", 1438], ["-1000", 1488]]} />
      <Flag x={3610} right={3669} y={D2.y(1392)} fill="#ffff00" ink="#222222" text="-47" />
    </Pane>
    <Pane box={[2070, 785, 1600, 28]}>
      <TimeAxis s={D1} y={785} xs="66 156 245 335 425 515 604 694 783 873 963 1053 1142 1231 1321 1412 1501" labels="09:43 09:43 09:44 09:44 09:45 09:45 09:46 09:46 09:47 09:47 09:48 09:49 09:49 09:50 09:51 09:52 09:53" />
      <TimeAxis s={D2} y={785} xs="212 313 414 515 617 718 819 920" labels="09:54 09:54 09:55 09:56 09:57 09:57 09:59 09:59" />
    </Pane>
  </Plot>
);

const Spread = styled.div`
  position: absolute;
  left: 0;
  bottom: 0;
  display: grid;
  grid-template-columns: 1fr 1fr;
  width: 80%;
  text-align: center;
  font-size: 11px;
  line-height: 18px;
  color: #ffffff;
`;
const SpreadKeys = styled.div`
  display: grid;
  grid-template-columns: 1fr 1fr;
  margin-top: 4px;
`;
const SpreadKey = styled.button<{ $red?: boolean }>`
  height: 20px;
  padding: 0;
  border: 1px solid #808080;
  background: ${(p) => (p.$red ? "#ff0000" : C.lime)};
  color: #f0f0f0;
  font: 16px/18px ${PLOT};
`;

const PinPointPlot = () => (
  <Plot>
    <Pane box={[2070, 852, 1600, 1012]} title="Ripple Chart PinPoint Entry Strategies for Target 1 & 2" ticker={17}
      extra={
        <Spread>
          <div>SPREAD TARGETS<SpreadKeys>{["EACH TICK NEAR", "EACH TICK FAR", "EVERY OTHER TICK NEAR", "EVERY OTHER TICK FAR"].map((t) => <SpreadKey key={t}>{t}</SpreadKey>)}</SpreadKeys></div>
          <div>STACK STOPS<SpreadKeys>{["STACK 10", "STACK 20", "STACK 30", "SPREAD"].map((t) => <SpreadKey $red key={t}>{t}</SpreadKey>)}</SpreadKeys></div>
        </Spread>
      }>
      <Shape s={E1} p="550,523 600,548 682,487 622,642 600,548 582,654" f="#350505" />
      <Line s={E1} p="582,654 550,523 600,548 682,487 622,642 600,548 582,654" c="#ff0000" />
      <Shape s={E1} p="735,590 808,412 820,487" f="#003300" o={0.6} />
      <Shape s={E1} p="820,487 904,340 985,537" f="#003300" o={0.7} />
      <Line s={E1} p="735,590 808,412 820,487 735,590" c={C.green} />
      <Line s={E1} p="820,487 904,340 1013,630 820,487 985,537" c={C.green} />
      <Line s={E1} p="904,340 985,537" c={C.green} />
      <Shape s={E1} p="1086,388 1272,740 1316,630" f="#2e0404" />
      <Shape s={E1} p="1316,630 1356,794 1535,426" f="#2e0404" />
      <Line s={E1} p="1086,388 1272,740 1316,630 1086,388" c="#ff0000" />
      <Line s={E1} p="1316,630 1356,794 1535,426 1316,630" c="#ff0000" />
      <Shape s={E2} p="308,302 540,592 588,407" f="#2e0404" />
      <Line s={E2} p="540,592 308,302 588,407" c="#ff0000" />
      <Line s={E2} p="308,302 674,622 696,548 308,302" c="#ff0000" />
      <Shape s={E2} p="588,407 674,622 696,548 755,705 865,350 696,548" f="#4a0505" o={0.8} />
      <Line s={E2} p="588,407 696,548 755,705 835,450 696,548 865,350" c="#ff0000" />
      <Box s={E1} r={[672, 432, 774, 491]} c="#ff0000" />
      <Box s={E1} r={[684, 475, 774, 494]} f="rgba(80,0,0,.6)" />
      <Box s={E2} r={[136, 296, 256, 440]} f="rgba(90,0,0,.45)" />
      <Level s={E2} y={333} a={136} b={256} c="#ff0000" w={2} />
      <Level s={E2} y={439} a={150} b={256} c="#ff0000" w={2} />
      <Box s={E2} r={[854, 211, 972, 352]} f="rgba(90,0,0,.45)" />
      <Level s={E2} y={247} a={854} b={972} c="#ff0000" w={2} />
      <Level s={E2} y={352} a={866} b={972} c="#ff0000" w={2} />
      <Box s={E2} r={[820, 339, 940, 451]} f="rgba(90,0,0,.45)" />
      <Level s={E2} y={371} a={820} b={940} c="#ff0000" w={2} />
      <Level s={E2} y={444} a={835} b={940} c="#ff0000" w={2} />
      <Box s={E1} r={[1000, 535, 1105, 647]} f="rgba(0,60,0,.5)" />
      <Level s={E1} y={562} a={985} b={1105} c={C.green} w={2} />
      <Level s={E1} y={624} a={1000} b={1105} c={C.green} w={2} />
      <line x1={E1.x(850)} x2={3609} y1={E1.y(387)} y2={E1.y(387)} stroke="#ffffff" strokeDasharray="3 1" />
      <line x1={E1.x(895)} x2={3609} y1={E1.y(395)} y2={E1.y(395)} stroke={C.crimson} strokeWidth={3} strokeDasharray="6 3" />
      <line x1={E1.x(740)} x2={3609} y1={E1.y(536)} y2={E1.y(536)} stroke="#ffffff" strokeDasharray="3 1" />
      <line x1={E1.x(1155)} x2={3609} y1={E1.y(555)} y2={E1.y(555)} stroke="#ffffff" strokeDasharray="3 1" />
      <line x1={E1.x(1064)} x2={3609} y1={E1.y(574)} y2={E1.y(574)} stroke={C.lime} strokeWidth={3} strokeDasharray="6 3" />
      <Level s={E2} y={703} a={804} b={1165} c={C.lime} w={2} dash="5 3" />
      <Level s={E2} y={414} a={893} b={1165} c={C.crimson} w={2} dash="6 3" />
      <Candles path={ePrice} step={1.8} body={2} tall={10} wick={7} up="#1088ff" down="#c00000" rise wickColor="#b8b8b8" />
      <Line s={E2} p="309,304 540,590 588,408" c="#00ff00" w={5} />
      <Line s={E2} p="588,408 755,705" c={C.lime} w={5} />
      <Dots s={E1} p="550,523 582,654 600,548 622,642 682,487 1086,388 1272,740 1316,629 1356,795 1535,426" c="#ff0000" />
      <Dots s={E2} p="308,302 540,592 588,407 674,622 696,548 865,352 835,450" c="#ff0000" />
      <Dots s={E1} p="731,591 808,413 820,487 904,339 1013,630" c={C.green} />
      <Dots s={E2} p="755,715" c="#00ff00" r={8} ring="#00ff00" />
      <Shade s={E1} a={959} b={1020} c={1082} bottom={1175} c1={852} c2={1824} />
      <Shade s={E2} a={560} b={647} c={733} bottom={1221} c1={852} c2={1824} />
      <Plus s={E1} at={[737, 537]} />
      <Plus s={E1} at={[839, 389]} />
      <Plus s={E1} at={[1152, 555]} />
      <Ready s={E1} at={[670, 377]} word="READY DL" />
      <Box s={E1} r={[837, 371, 876, 420]} c="#ff0000" f="rgba(80,0,0,.4)" />
      <Plus s={E1} at={[857, 395]} c="#ff0000" w={51} h={104} t={9} />
      <Box s={E1} r={[1006, 549, 1043, 599]} c={C.lime} f="rgba(0,80,0,.4)" />
      <Plus s={E1} at={[1025, 574]} c={C.lime} w={51} h={104} t={9} />
      <Box s={E2} r={[826, 389, 871, 439]} c="#ff0000" f="rgba(120,0,0,.4)" />
      <Plus s={E2} at={[848, 414]} c="#ff0000" w={51} h={104} t={9} />
      <Box s={E2} r={[736, 679, 780, 728]} c={C.lime} f="rgba(0,80,0,.4)" />
      <Plus s={E2} at={[758, 703]} c={C.lime} w={51} h={104} t={9} />
      <Pattern s={E1} at={[586, 483]} c="#ff0000">Butterfly</Pattern>
      <Pattern s={E1} at={[905, 545]}>Cypher</Pattern>
      <Pattern s={E1} at={[941, 606]}>Shark</Pattern>
      <Pattern s={E2} at={[69, 371]} c="#ff0000">Shark</Pattern>
      <Pattern s={E2} at={[786, 285]} c="#ff0000">Shark</Pattern>
      <Pattern s={E2} at={[755, 397]} c="#ff0000">Shark</Pattern>
      <Strength x={E1.x(753)} y={E1.y(371)} $c="#ff0000">10.7</Strength>
      <Strength x={E1.x(919)} y={E1.y(549)} $c={C.lime}>11.2</Strength>
      <Strength x={E2.x(638)} y={E2.y(679)} $c={C.lime}>10.5</Strength>
      <Strength x={E2.x(750)} y={E2.y(386)} $c="#ff0000">11</Strength>
      {([[381, "20,630.75"], [387, "20,630.50"], [407, "20,629.75"], [530, "20,624.75"], [548, "20,624.00"], [567, "20,623.25"], [696, "20,618.00"], [1213, "20,597.00"]] as [number, string][]).map(([y, t]) => (
        <Price key={y} s={E2} x={1156} y={y}>{t}</Price>
      ))}
      <Axis x={3611.5} top={852} bottom={1864} s={E2} ticks={ramp(20644, 2, 62, 49.3, 24)} />
      <Flag x={3611} right={3669} y={E2.y(346)} fill="#030303" ink="#ffffff" text="20632.50" />
    </Pane>
    <Pane box={[2070, 1864, 1600, 259]} title="AlgoBox__DeltaFlaggingPRO" copyright={8}>
      <line x1={2070} x2={3609} y1={E1.y(1370)} y2={E1.y(1370)} stroke="#0000ff" strokeWidth={2} />
      <Delta s={E1} base={1370} step={3} from={40} to={1560}
        ups="88 122 24 118 124 38 185 197 10 250 272 15 298 302 30 480 495 10 690 701 22 763 767 20 808 840 32 830 852 80 1035 1074 32 1385 1391 14 1445 1461 20 1490 1538 30"
        downs="130 145 8 322 343 20 350 358 14 385 405 14 565 578 12 725 742 20 855 877 18 900 930 12 960 1019 125 1135 1176 58 1225 1272 54 1330 1358 32 1490 1494 25" />
      <Delta s={E2} base={1370} step={4} from={170} to={920}
        ups="300 322 10 490 518 28 578 588 8 765 843 124 870 905 28 390 401 7"
        downs="97 104 25 360 385 12 635 673 34 722 752 68 905 938 17" />
      <Level s={E1} y={1388} a={34} b={2242} c="#eeee88" />
      <Axis x={3611.5} top={1864} bottom={2123} s={E2} ticks={ramp(800, 200, 1238, 33.1, 9, 0)} />
      <Flag x={3611} right={3669} y={E2.y(1388)} fill="#ffff00" ink="#222222" text="-101" />
    </Pane>
    <Pane box={[2070, 2123, 1600, 27]}>
      <TimeAxis s={E1} y={2122} xs="67 156 243 331 419 507 594 682 769 858 946 1037 1125 1213 1300 1388 1476" labels="09:54 09:55 09:55 09:55 09:55 09:55 09:56 09:56 09:56 09:56 09:56 09:56 09:57 09:57 09:57 09:57 09:57" />
      <TimeAxis s={E2} y={2122} xs="181 281 380 479 582 681 779 879" labels="09:57 09:58 09:58 09:58 09:59 09:59 09:59 09:59" />
    </Pane>
  </Plot>
);

/* ------------------------------------------------------------------ */
/* Chart trader panel                                                  */
/* ------------------------------------------------------------------ */

const Panel = styled.aside`
  display: flex;
  flex: none;
  flex-direction: column;
  width: 154px;
`;
const Orders = styled.div`
  display: grid;
  grid-template-columns: 1fr 1fr;
  gap: 6px;
  margin-bottom: 7px;
`;
const Quicks = styled.div`
  display: grid;
  grid-template-columns: 1fr 1fr;
  gap: 1px;
`;
const Order = styled.button<{ $c: string }>`
  height: 28px;
  padding: 0 0 2px;
  border: 1px solid #404048;
  background: ${(p) => p.$c};
  color: #d0d0d0;
  font-size: 14px;
`;
const Quick = styled.button<{ $c: string; $wide?: boolean }>`
  grid-column: ${(p) => (p.$wide ? "1 / -1" : "auto")};
  height: 29px;
  padding: 0 0 2px;
  border: 1px solid #404048;
  background: ${(p) => p.$c};
  color: #ffffff;
  font-size: 14px;
`;
const Position = styled.table`
  width: 100%;
  margin-bottom: 7px;
  border-collapse: collapse;
  background: #1a1a1a;
  font-size: 12px;
  text-align: center;
  td { height: 27px; padding: 0; border: 1px solid ${C.edge}; }
  tr:last-child td { color: #dd0000; }
`;
const Fields = styled.div`
  display: grid;
  grid-template-columns: 90px 58px;
  column-gap: 6px;
  font-size: 12px;
`;
const Caps = styled.label<{ $wide?: boolean }>`
  grid-column: ${(p) => (p.$wide ? "1 / -1" : "auto")};
  height: 27px;
  line-height: 27px;
  white-space: nowrap;
`;
const Cell = styled.div<{ $wide?: boolean }>`
  position: relative;
  grid-column: ${(p) => (p.$wide ? "1 / -1" : "auto")};
`;
const Qty = styled.div`
  display: flex;
  align-items: center;
  height: 20px;
  padding-right: 4px;
  background: ${C.field};
  input {
    flex: 1;
    min-width: 0;
    height: 100%;
    padding: 0 0 0 8px;
    border: 0;
    background: none;
    color: ${C.ink};
    font-size: 11px;
  }
`;
const Info = styled.b`
  position: absolute;
  left: 8px;
  top: 0;
  font: 700 13px/20px "DejaVu Serif", serif;
  pointer-events: none;
`;
const Targets = styled.dl`
  display: grid;
  grid-template-columns: 17px 71px 1fr;
  margin: 4px 0 0;
  font-size: 12px;
  line-height: 20px;
  dt, dd { margin: 0; }
`;
const Banner = styled.button<{ $mt?: number }>`
  height: 27px;
  margin-top: ${(p) => p.$mt || 0}px;
  padding: 0 0 2px;
  border: 1px solid #404048;
  background: ${C.lime};
  color: #f0f0f0;
  font-size: 12px;
`;
const Speed = styled.div`
  display: grid;
  grid-template-columns: 1fr 1fr;
  text-align: center;
  color: #e6e6e6;
  font-size: 12px;
  line-height: 14px;
`;
const SpeedValue = styled.output<{ $c: string }>`
  height: 30px;
  margin-top: 7px;
  border: 1px solid #808080;
  background: ${(p) => p.$c};
  font-size: 14px;
  line-height: 27px;
`;
const Moods = styled.div`
  display: grid;
  grid-template-columns: repeat(3, 1fr);
  margin-top: 5px;
`;
const Mood = styled.button<{ $c: string }>`
  height: 30px;
  padding: 0;
  border: 1px solid #666666;
  background: ${(p) => p.$c};
  color: #ffffff;
  font-size: 14px;
`;

const Trader = ({ id, strategy, full }: { id: string; strategy: string; full?: boolean }) => (
  <Panel>
    <Orders>
      {["Mkt", "Ask", "Bid"].map((k) => (
        <React.Fragment key={k}>
          <Order $c={C.lime}>Buy {k}</Order>
          <Order $c={C.crimson}>Sell {k}</Order>
        </React.Fragment>
      ))}
      <Order $c={C.steel}>Rev</Order>
      <Order $c={C.steel}>Close</Order>
    </Orders>
    <Position>
      <tbody>
        <tr><td>Flat</td><td>Entry</td></tr>
        <tr><td colSpan={2}>$0.00</td></tr>
      </tbody>
    </Position>
    {full && (
      <Quicks>
        <Quick $c={C.lime}>Bracket</Quick>
        <Quick $c="#ff0000">Add Stop</Quick>
        <Quick $c="#0000ff" $wide>Naked</Quick>
        <Quick $c="#ff0000" $wide>Flatten All</Quick>
        <Quick $c="#0000ff">Half</Quick>
        <Quick $c={C.lime}>Double</Quick>
      </Quicks>
    )}
    <Fields>
      <Caps htmlFor={`${id}-inst`}>Instrument</Caps>
      <Caps htmlFor={`${id}-tif`}>TIF</Caps>
      <Cell><Picker as="div" $h={20} $off><Select id={`${id}-inst`} disabled $off><option>NQ 12-24</option></Select><Chevron /></Picker></Cell>
      <Cell><Picker as="div" $h={20}><Select id={`${id}-tif`}><option>DAY</option></Select><Chevron /></Picker></Cell>
      <Caps htmlFor={`${id}-acc`}>Account</Caps>
      <Caps htmlFor={`${id}-qty`}>Order qty</Caps>
      <Cell><Picker as="div" $h={20}><Select id={`${id}-acc`}><option></option></Select><Chevron /></Picker></Cell>
      <Cell>
        <Qty>
          <input id={`${id}-qty`} defaultValue="2" />
          <svg width="26" height="14" viewBox="0 0 26 14">
            <path d="M.5 .5h11v3H.5z" fill="none" stroke="#ccc" />
            <path d="M1 5.5h11M1 8.5h11M1 11.5h11" stroke="#ccc" strokeWidth="2" strokeDasharray="2 1" />
            <path d="M17 4.5l3.5-4 3.5 4zM17 9.5l3.5 4 3.5-4z" fill="#ccc" />
          </svg>
        </Qty>
      </Cell>
      <Caps htmlFor={`${id}-atm`} $wide>ATM Strategy</Caps>
      <Cell $wide><Picker as="div" $h={20}><Select id={`${id}-atm`} $pad={35}><option>{strategy}</option></Select><Chevron /></Picker><Info>i</Info></Cell>
    </Fields>
    <Targets><dt>A:</dt><dd>0</dd><dd>0</dd><dt>B:</dt><dd>0</dd><dd>0</dd></Targets>
    {full && (
      <>
        <Banner>AlgoBox Speedometer</Banner>
        <Speed>
          <span>AVG</span>
          <span>NOW</span>
          <SpeedValue $c="#0000ff">138.25</SpeedValue>
          <SpeedValue $c="#ff0000">80.00</SpeedValue>
        </Speed>
        <Banner $mt={4}>Psychology</Banner>
        <Moods>
          <Mood $c="#191970">B</Mood>
          <Mood $c="#006400">O</Mood>
          <Mood $c="#800000">T</Mood>
        </Moods>
      </>
    )}
  </Panel>
);

export default function App() {
  return (
    <>
      <GlobalStyle />
      <Desktop>
        <Stack $rows="1fr 1fr">
          <RangeChart />
          <ScalpChart />
        </Stack>
        <Stack $rows="1fr">
          <MacvChart />
        </Stack>
        <Stack $rows="820fr 1340fr">
          <Frame>
            <Toolbar range="6 AlgoBars ROCK" height={29} audio trading />
            <Body $foot={6}><RunnerPlot /><Trader id="runner" strategy="_BIG_15_25_25s" /></Body>
          </Frame>
          <Frame>
            <Toolbar range="2 AlgoBars ROCK" trading />
            <Body $foot={9}><PinPointPlot /><Trader id="pin" strategy="_BIGGER_20_30_..." full /></Body>
          </Frame>
        </Stack>
      </Desktop>
    </>
  );
}
